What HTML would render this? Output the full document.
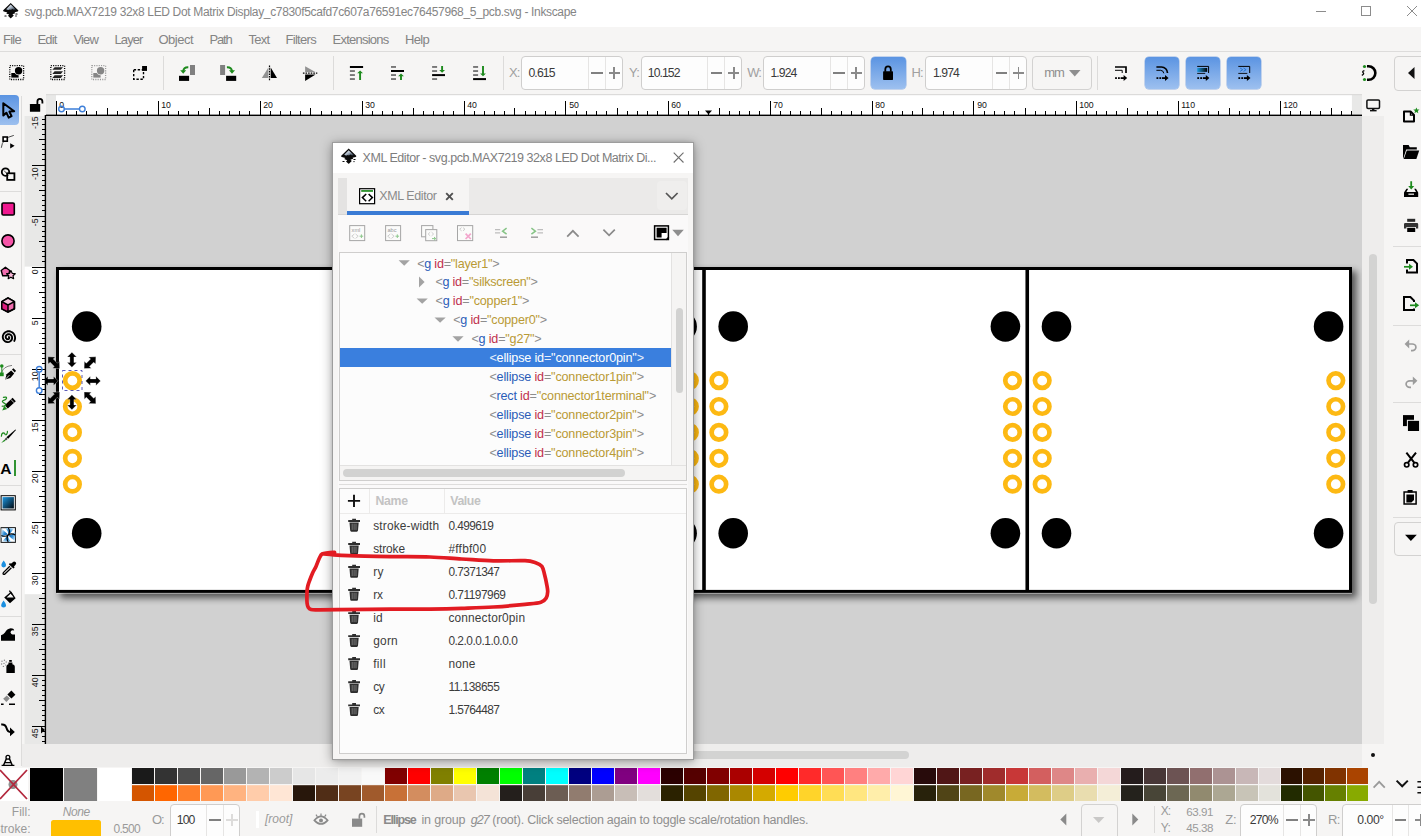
<!DOCTYPE html><html><head><meta charset="utf-8"><title>Inkscape</title><style>html,body{margin:0;padding:0}body{width:1421px;height:836px;position:relative;overflow:hidden;background:#f6f5f4;font-family:"Liberation Sans",sans-serif}span{display:block}span span{display:inline}</style></head><body><div style="position:absolute;left:0px;top:0px;width:1421px;height:27px;background:#fff;"></div><span style="position:absolute;top:4.00px;line-height:17px;font-size:12px;color:#858585;white-space:pre;left:24.40px;letter-spacing:-0.341px;">svg.pcb.MAX7219 32x8 LED Dot Matrix Display_c7830f5cafd7c607a76591ec76457968_5_pcb.svg - Inkscape</span><svg width="120" height="27" viewBox="1301 0 120 27" style="position:absolute;left:1301px;top:0"><g stroke="#8c8c8c" stroke-width="1" fill="none"><path d="M1316,11.5H1326"/><rect x="1361.5" y="6.5" width="9" height="9"/><path d="M1407,6L1417,16M1417,6L1407,16"/></g></svg><div style="position:absolute;left:0px;top:27px;width:1421px;height:24px;background:#f6f5f4;"></div><span style="position:absolute;top:30.70px;line-height:18px;font-size:13px;color:#848484;white-space:pre;left:3.00px;letter-spacing:-0.737px;">File</span><span style="position:absolute;top:30.70px;line-height:18px;font-size:13px;color:#848484;white-space:pre;left:37.50px;letter-spacing:-0.850px;">Edit</span><span style="position:absolute;top:30.70px;line-height:18px;font-size:13px;color:#848484;white-space:pre;left:73.50px;letter-spacing:-0.861px;">View</span><span style="position:absolute;top:30.70px;line-height:18px;font-size:13px;color:#848484;white-space:pre;left:114.50px;letter-spacing:-0.904px;">Layer</span><span style="position:absolute;top:30.70px;line-height:18px;font-size:13px;color:#848484;white-space:pre;left:158.50px;letter-spacing:-0.512px;">Object</span><span style="position:absolute;top:30.70px;line-height:18px;font-size:13px;color:#848484;white-space:pre;left:209.50px;letter-spacing:-1.186px;">Path</span><span style="position:absolute;top:30.70px;line-height:18px;font-size:13px;color:#848484;white-space:pre;left:248.50px;letter-spacing:-0.710px;">Text</span><span style="position:absolute;top:30.70px;line-height:18px;font-size:13px;color:#848484;white-space:pre;left:285.50px;letter-spacing:-0.698px;">Filters</span><span style="position:absolute;top:30.70px;line-height:18px;font-size:13px;color:#848484;white-space:pre;left:332.50px;letter-spacing:-0.759px;">Extensions</span><span style="position:absolute;top:30.70px;line-height:18px;font-size:13px;color:#848484;white-space:pre;left:405.00px;letter-spacing:-0.684px;">Help</span><div style="position:absolute;left:0px;top:51px;width:1421px;height:1px;background:#dddcdb;"></div><div style="position:absolute;left:0px;top:52px;width:1421px;height:42px;background:#f6f5f4;"></div><div style="position:absolute;left:163.0px;top:56px;width:1px;height:34px;background:#dcdbda;"></div><div style="position:absolute;left:333.0px;top:56px;width:1px;height:34px;background:#dcdbda;"></div><div style="position:absolute;left:503.0px;top:56px;width:1px;height:34px;background:#dcdbda;"></div><div style="position:absolute;left:1097.0px;top:56px;width:1px;height:34px;background:#dcdbda;"></div><span style="position:absolute;top:63.50px;line-height:18px;font-size:13px;color:#a0a0a0;white-space:pre;left:509.00px;letter-spacing:-0.891px;">X:</span><div style="position:absolute;left:521px;top:56px;width:99.5px;height:31.5px;background:#fdfdfd;border:1px solid #cfcecd;border-radius:4px;"></div><div style="position:absolute;left:587.8px;top:57px;width:1px;height:31.5px;background:#e6e5e4;"></div><div style="position:absolute;left:604.9px;top:57px;width:1px;height:31.5px;background:#e6e5e4;"></div><span style="position:absolute;top:64.70px;line-height:17px;font-size:12.2px;color:#3a3a3a;white-space:pre;left:528.40px;letter-spacing:-0.820px;">0.615</span><div style="position:absolute;left:591.1499999999999px;top:72.0px;width:11.4px;height:1.9px;background:#808080;"></div><div style="position:absolute;left:608.5px;top:72.0px;width:11.4px;height:1.9px;background:#8a8a8a;"></div><div style="position:absolute;left:613.25px;top:67.2px;width:1.9px;height:11.4px;background:#8a8a8a;"></div><span style="position:absolute;top:63.50px;line-height:18px;font-size:13px;color:#a0a0a0;white-space:pre;left:629.00px;letter-spacing:-0.783px;">Y:</span><div style="position:absolute;left:640.5px;top:56px;width:99.5px;height:31.5px;background:#fdfdfd;border:1px solid #cfcecd;border-radius:4px;"></div><div style="position:absolute;left:707.2px;top:57px;width:1px;height:31.5px;background:#e6e5e4;"></div><div style="position:absolute;left:724.3px;top:57px;width:1px;height:31.5px;background:#e6e5e4;"></div><span style="position:absolute;top:64.70px;line-height:17px;font-size:12.2px;color:#3a3a3a;white-space:pre;left:647.80px;letter-spacing:-0.929px;">10.152</span><div style="position:absolute;left:710.55px;top:72.0px;width:11.4px;height:1.9px;background:#808080;"></div><div style="position:absolute;left:727.9499999999999px;top:72.0px;width:11.4px;height:1.9px;background:#8a8a8a;"></div><div style="position:absolute;left:732.6999999999999px;top:67.2px;width:1.9px;height:11.4px;background:#8a8a8a;"></div><span style="position:absolute;top:63.50px;line-height:18px;font-size:13px;color:#a0a0a0;white-space:pre;left:747.30px;letter-spacing:-1.073px;">W:</span><div style="position:absolute;left:763px;top:56px;width:99.5px;height:31.5px;background:#fdfdfd;border:1px solid #cfcecd;border-radius:4px;"></div><div style="position:absolute;left:829.9px;top:57px;width:1px;height:31.5px;background:#e6e5e4;"></div><div style="position:absolute;left:847px;top:57px;width:1px;height:31.5px;background:#e6e5e4;"></div><span style="position:absolute;top:64.70px;line-height:17px;font-size:12.2px;color:#3a3a3a;white-space:pre;left:770.50px;letter-spacing:-0.920px;">1.924</span><div style="position:absolute;left:833.25px;top:72.0px;width:11.4px;height:1.9px;background:#808080;"></div><div style="position:absolute;left:850.55px;top:72.0px;width:11.4px;height:1.9px;background:#8a8a8a;"></div><div style="position:absolute;left:855.3px;top:67.2px;width:1.9px;height:11.4px;background:#8a8a8a;"></div><div style="position:absolute;left:871px;top:56.5px;width:34.5px;height:32.5px;background:linear-gradient(#5b94e2,#9dc0ef);border-radius:4px;box-shadow:0 0 0 0.5px #8fb2e3;"></div><span style="position:absolute;top:63.50px;line-height:18px;font-size:13px;color:#a0a0a0;white-space:pre;left:911.50px;letter-spacing:-1.000px;">H:</span><div style="position:absolute;left:925px;top:56px;width:99.5px;height:31.5px;background:#fdfdfd;border:1px solid #cfcecd;border-radius:4px;"></div><div style="position:absolute;left:992.3px;top:57px;width:1px;height:31.5px;background:#e6e5e4;"></div><div style="position:absolute;left:1009.4px;top:57px;width:1px;height:31.5px;background:#e6e5e4;"></div><span style="position:absolute;top:64.70px;line-height:17px;font-size:12.2px;color:#3a3a3a;white-space:pre;left:933.00px;letter-spacing:-0.920px;">1.974</span><div style="position:absolute;left:995.6499999999999px;top:72.0px;width:11.4px;height:1.9px;background:#808080;"></div><div style="position:absolute;left:1012.75px;top:72.0px;width:11.4px;height:1.9px;background:#8a8a8a;"></div><div style="position:absolute;left:1017.5px;top:67.2px;width:1.9px;height:11.4px;background:#8a8a8a;"></div><div style="position:absolute;left:1032px;top:56px;width:58px;height:31.5px;background:#f6f5f4;border:1px solid #d3d2d1;border-radius:4px;"></div><span style="position:absolute;top:64.30px;line-height:18px;font-size:13px;color:#8e8e8e;white-space:pre;left:1044.30px;letter-spacing:-1.079px;">mm</span><svg width="12" height="7" style="position:absolute;left:1069px;top:69.5px"><path d="M0,0H11.5L5.75,6.5Z" fill="#8e8e8e"/></svg><div style="position:absolute;left:1144.5px;top:56.5px;width:34.8px;height:32.7px;background:linear-gradient(#5b94e2,#9dc0ef);border-radius:4px;box-shadow:0 0 0 0.5px #8fb2e3;"></div><div style="position:absolute;left:1185.5px;top:56.5px;width:34.8px;height:32.7px;background:linear-gradient(#5b94e2,#9dc0ef);border-radius:4px;box-shadow:0 0 0 0.5px #8fb2e3;"></div><div style="position:absolute;left:1226.5px;top:56.5px;width:34.8px;height:32.7px;background:linear-gradient(#5b94e2,#9dc0ef);border-radius:4px;box-shadow:0 0 0 0.5px #8fb2e3;"></div><div style="position:absolute;left:1393.5px;top:56px;width:30px;height:33px;background:#f6f5f4;border:1px solid #d3d2d1;border-radius:4px;"></div><svg width="8" height="13" style="position:absolute;left:1407.5px;top:66.5px"><path d="M6.5,0V12L0,6Z" fill="#111"/></svg><div style="position:absolute;left:21.3px;top:96px;width:1px;height:670px;background:#dddcdb;"></div><div style="position:absolute;left:0px;top:95px;width:19.2px;height:30px;background:linear-gradient(#5b94e2,#9dc0ef);border-radius:0 4px 4px 0;"></div><div style="position:absolute;left:0px;top:191.1px;width:21px;height:1px;background:#dddcdb;"></div><div style="position:absolute;left:0px;top:353.7px;width:21px;height:1px;background:#dddcdb;"></div><div style="position:absolute;left:0px;top:484.9px;width:21px;height:1px;background:#dddcdb;"></div><div style="position:absolute;left:0px;top:615.7px;width:21px;height:1px;background:#dddcdb;"></div><div style="position:absolute;left:1392.5px;top:245.9px;width:29px;height:1px;background:#dddcdb;"></div><div style="position:absolute;left:1392.5px;top:324.5px;width:29px;height:1px;background:#dddcdb;"></div><div style="position:absolute;left:1392.5px;top:402.1px;width:29px;height:1px;background:#dddcdb;"></div><div style="position:absolute;left:1392.5px;top:517.1px;width:29px;height:1px;background:#dddcdb;"></div><div style="position:absolute;left:1393.5px;top:521.6px;width:30px;height:32px;background:#f6f5f4;border:1px solid #d3d2d1;border-radius:4px;"></div><span style="position:absolute;top:460.60px;line-height:16px;font-size:15.5px;color:#000;white-space:pre;left:0.30px;font-weight:bold;">A</span><div style="position:absolute;left:46px;top:116px;width:1316px;height:628px;background:#d1d1d1;overflow:hidden"><svg width="1421" height="836" viewBox="0 0 1421 836" style="position:absolute;left:-46px;top:-116px"><defs><filter id="psh" x="-5%" y="-5%" width="110%" height="115%"><feGaussianBlur stdDeviation="3.8"/></filter></defs><rect x="60" y="271" width="1296.5" height="327" fill="#000" opacity="0.6" filter="url(#psh)"/><rect x="56.6" y="267.0" width="1295.3" height="326.4" fill="#fff"/><rect x="57.5" y="268.5" width="1293.0" height="322.9" fill="none" stroke="#000" stroke-width="3"/><line x1="380.75" y1="268.5" x2="380.75" y2="591.4" stroke="#000" stroke-width="3.6"/><line x1="704.00" y1="268.5" x2="704.00" y2="591.4" stroke="#000" stroke-width="3.6"/><line x1="1027.25" y1="268.5" x2="1027.25" y2="591.4" stroke="#000" stroke-width="3.6"/><ellipse cx="86.7" cy="326.5" rx="14.8" ry="15.2" fill="#000"/><ellipse cx="86.7" cy="533.2" rx="14.8" ry="15.2" fill="#000"/><ellipse cx="358.9" cy="326.5" rx="14.8" ry="15.2" fill="#000"/><ellipse cx="358.9" cy="533.2" rx="14.8" ry="15.2" fill="#000"/><circle cx="72.4" cy="380.6" r="7.25" fill="none" stroke="#fdb913" stroke-width="4.7"/><circle cx="72.4" cy="406.5" r="7.25" fill="none" stroke="#fdb913" stroke-width="4.7"/><circle cx="72.4" cy="432.4" r="7.25" fill="none" stroke="#fdb913" stroke-width="4.7"/><circle cx="72.4" cy="458.3" r="7.25" fill="none" stroke="#fdb913" stroke-width="4.7"/><circle cx="72.4" cy="484.2" r="7.25" fill="none" stroke="#fdb913" stroke-width="4.7"/><circle cx="366.1" cy="380.6" r="7.25" fill="none" stroke="#fdb913" stroke-width="4.7"/><circle cx="366.1" cy="406.5" r="7.25" fill="none" stroke="#fdb913" stroke-width="4.7"/><circle cx="366.1" cy="432.4" r="7.25" fill="none" stroke="#fdb913" stroke-width="4.7"/><circle cx="366.1" cy="458.3" r="7.25" fill="none" stroke="#fdb913" stroke-width="4.7"/><circle cx="366.1" cy="484.2" r="7.25" fill="none" stroke="#fdb913" stroke-width="4.7"/><ellipse cx="409.9" cy="326.5" rx="14.8" ry="15.2" fill="#000"/><ellipse cx="409.9" cy="533.2" rx="14.8" ry="15.2" fill="#000"/><ellipse cx="682.1" cy="326.5" rx="14.8" ry="15.2" fill="#000"/><ellipse cx="682.1" cy="533.2" rx="14.8" ry="15.2" fill="#000"/><circle cx="395.6" cy="380.6" r="7.25" fill="none" stroke="#fdb913" stroke-width="4.7"/><circle cx="395.6" cy="406.5" r="7.25" fill="none" stroke="#fdb913" stroke-width="4.7"/><circle cx="395.6" cy="432.4" r="7.25" fill="none" stroke="#fdb913" stroke-width="4.7"/><circle cx="395.6" cy="458.3" r="7.25" fill="none" stroke="#fdb913" stroke-width="4.7"/><circle cx="395.6" cy="484.2" r="7.25" fill="none" stroke="#fdb913" stroke-width="4.7"/><circle cx="689.3" cy="380.6" r="7.25" fill="none" stroke="#fdb913" stroke-width="4.7"/><circle cx="689.3" cy="406.5" r="7.25" fill="none" stroke="#fdb913" stroke-width="4.7"/><circle cx="689.3" cy="432.4" r="7.25" fill="none" stroke="#fdb913" stroke-width="4.7"/><circle cx="689.3" cy="458.3" r="7.25" fill="none" stroke="#fdb913" stroke-width="4.7"/><circle cx="689.3" cy="484.2" r="7.25" fill="none" stroke="#fdb913" stroke-width="4.7"/><ellipse cx="733.2" cy="326.5" rx="14.8" ry="15.2" fill="#000"/><ellipse cx="733.2" cy="533.2" rx="14.8" ry="15.2" fill="#000"/><ellipse cx="1005.4" cy="326.5" rx="14.8" ry="15.2" fill="#000"/><ellipse cx="1005.4" cy="533.2" rx="14.8" ry="15.2" fill="#000"/><circle cx="718.9" cy="380.6" r="7.25" fill="none" stroke="#fdb913" stroke-width="4.7"/><circle cx="718.9" cy="406.5" r="7.25" fill="none" stroke="#fdb913" stroke-width="4.7"/><circle cx="718.9" cy="432.4" r="7.25" fill="none" stroke="#fdb913" stroke-width="4.7"/><circle cx="718.9" cy="458.3" r="7.25" fill="none" stroke="#fdb913" stroke-width="4.7"/><circle cx="718.9" cy="484.2" r="7.25" fill="none" stroke="#fdb913" stroke-width="4.7"/><circle cx="1012.5" cy="380.6" r="7.25" fill="none" stroke="#fdb913" stroke-width="4.7"/><circle cx="1012.5" cy="406.5" r="7.25" fill="none" stroke="#fdb913" stroke-width="4.7"/><circle cx="1012.5" cy="432.4" r="7.25" fill="none" stroke="#fdb913" stroke-width="4.7"/><circle cx="1012.5" cy="458.3" r="7.25" fill="none" stroke="#fdb913" stroke-width="4.7"/><circle cx="1012.5" cy="484.2" r="7.25" fill="none" stroke="#fdb913" stroke-width="4.7"/><ellipse cx="1056.5" cy="326.5" rx="14.8" ry="15.2" fill="#000"/><ellipse cx="1056.5" cy="533.2" rx="14.8" ry="15.2" fill="#000"/><ellipse cx="1328.6" cy="326.5" rx="14.8" ry="15.2" fill="#000"/><ellipse cx="1328.6" cy="533.2" rx="14.8" ry="15.2" fill="#000"/><circle cx="1042.2" cy="380.6" r="7.25" fill="none" stroke="#fdb913" stroke-width="4.7"/><circle cx="1042.2" cy="406.5" r="7.25" fill="none" stroke="#fdb913" stroke-width="4.7"/><circle cx="1042.2" cy="432.4" r="7.25" fill="none" stroke="#fdb913" stroke-width="4.7"/><circle cx="1042.2" cy="458.3" r="7.25" fill="none" stroke="#fdb913" stroke-width="4.7"/><circle cx="1042.2" cy="484.2" r="7.25" fill="none" stroke="#fdb913" stroke-width="4.7"/><circle cx="1335.8" cy="380.6" r="7.25" fill="none" stroke="#fdb913" stroke-width="4.7"/><circle cx="1335.8" cy="406.5" r="7.25" fill="none" stroke="#fdb913" stroke-width="4.7"/><circle cx="1335.8" cy="432.4" r="7.25" fill="none" stroke="#fdb913" stroke-width="4.7"/><circle cx="1335.8" cy="458.3" r="7.25" fill="none" stroke="#fdb913" stroke-width="4.7"/><circle cx="1335.8" cy="484.2" r="7.25" fill="none" stroke="#fdb913" stroke-width="4.7"/><rect x="62.5" y="370.5" width="19.5" height="20" fill="none" stroke="#4a4ab0" stroke-width="0.9" stroke-dasharray="3 3"/><path d="M-7.5,0 L-2.8,-4.7 L-2.8,-2 L2.8,-2 L2.8,-4.7 L7.5,0 L2.8,4.7 L2.8,2 L-2.8,2 L-2.8,4.7 Z" transform="translate(71.9,359.8) rotate(90)" fill="#000" stroke="#fff" stroke-opacity="0.35" stroke-width="0.8"/><path d="M-7.5,0 L-2.8,-4.7 L-2.8,-2 L2.8,-2 L2.8,-4.7 L7.5,0 L2.8,4.7 L2.8,2 L-2.8,2 L-2.8,4.7 Z" transform="translate(71.9,402.2) rotate(90)" fill="#000" stroke="#fff" stroke-opacity="0.35" stroke-width="0.8"/><path d="M-7.5,0 L-2.8,-4.7 L-2.8,-2 L2.8,-2 L2.8,-4.7 L7.5,0 L2.8,4.7 L2.8,2 L-2.8,2 L-2.8,4.7 Z" transform="translate(93.1,380.9) rotate(0)" fill="#000" stroke="#fff" stroke-opacity="0.35" stroke-width="0.8"/><path d="M-7.5,0 L-2.8,-4.7 L-2.8,-2 L2.8,-2 L2.8,-4.7 L7.5,0 L2.8,4.7 L2.8,2 L-2.8,2 L-2.8,4.7 Z" transform="translate(50.7,380.9) rotate(0)" fill="#000" stroke="#fff" stroke-opacity="0.35" stroke-width="0.8"/><path d="M-8.3,0 L-3,-5 L-3,-2.2 L3,-2.2 L3,-5 L8.3,0 L3,5 L3,2.2 L-3,2.2 L-3,5 Z" transform="translate(90.0,362.7) rotate(-45)" fill="#000" stroke="#fff" stroke-opacity="0.35" stroke-width="0.8"/><path d="M-8.3,0 L-3,-5 L-3,-2.2 L3,-2.2 L3,-5 L8.3,0 L3,5 L3,2.2 L-3,2.2 L-3,5 Z" transform="translate(53.8,362.7) rotate(45)" fill="#000" stroke="#fff" stroke-opacity="0.35" stroke-width="0.8"/><path d="M-8.3,0 L-3,-5 L-3,-2.2 L3,-2.2 L3,-5 L8.3,0 L3,5 L3,2.2 L-3,2.2 L-3,5 Z" transform="translate(90.0,397.8) rotate(45)" fill="#000" stroke="#fff" stroke-opacity="0.35" stroke-width="0.8"/><path d="M-8.3,0 L-3,-5 L-3,-2.2 L3,-2.2 L3,-5 L8.3,0 L3,5 L3,2.2 L-3,2.2 L-3,5 Z" transform="translate(53.8,397.8) rotate(-45)" fill="#000" stroke="#fff" stroke-opacity="0.35" stroke-width="0.8"/></svg></div><svg width="1421" height="836" viewBox="0 0 1421 836" style="position:absolute;left:0;top:0;pointer-events:none"><rect x="46" y="94.5" width="1316" height="21.5" fill="#e8e8e7"/><rect x="56.0" y="94.5" width="1295.9" height="21.5" fill="#fff"/><rect x="46" y="94" width="1316" height="1.2" fill="#dcdbda"/><path d="M56.5,101V115.5M66.5,111V115.5M76.5,111V115.5M86.5,111V115.5M96.5,111V115.5M107.5,108V115.5M117.5,111V115.5M127.5,111V115.5M137.5,111V115.5M147.5,111V115.5M158.5,101V115.5M168.5,111V115.5M178.5,111V115.5M188.5,111V115.5M198.5,111V115.5M209.5,108V115.5M219.5,111V115.5M229.5,111V115.5M239.5,111V115.5M249.5,111V115.5M260.5,101V115.5M270.5,111V115.5M280.5,111V115.5M290.5,111V115.5M300.5,111V115.5M310.5,108V115.5M321.5,111V115.5M331.5,111V115.5M341.5,111V115.5M351.5,111V115.5M362.5,101V115.5M372.5,111V115.5M382.5,111V115.5M392.5,111V115.5M402.5,111V115.5M413.5,108V115.5M423.5,111V115.5M433.5,111V115.5M443.5,111V115.5M453.5,111V115.5M464.5,101V115.5M474.5,111V115.5M484.5,111V115.5M494.5,111V115.5M504.5,111V115.5M514.5,108V115.5M525.5,111V115.5M535.5,111V115.5M545.5,111V115.5M555.5,111V115.5M565.5,101V115.5M576.5,111V115.5M586.5,111V115.5M596.5,111V115.5M606.5,111V115.5M617.5,108V115.5M627.5,111V115.5M637.5,111V115.5M647.5,111V115.5M657.5,111V115.5M668.5,101V115.5M678.5,111V115.5M688.5,111V115.5M698.5,111V115.5M708.5,111V115.5M719.5,108V115.5M729.5,111V115.5M739.5,111V115.5M749.5,111V115.5M759.5,111V115.5M770.5,101V115.5M780.5,111V115.5M790.5,111V115.5M800.5,111V115.5M810.5,111V115.5M821.5,108V115.5M831.5,111V115.5M841.5,111V115.5M851.5,111V115.5M861.5,111V115.5M872.5,101V115.5M882.5,111V115.5M892.5,111V115.5M902.5,111V115.5M912.5,111V115.5M922.5,108V115.5M933.5,111V115.5M943.5,111V115.5M953.5,111V115.5M963.5,111V115.5M973.5,101V115.5M984.5,111V115.5M994.5,111V115.5M1004.5,111V115.5M1014.5,111V115.5M1025.5,108V115.5M1035.5,111V115.5M1045.5,111V115.5M1055.5,111V115.5M1065.5,111V115.5M1076.5,101V115.5M1086.5,111V115.5M1096.5,111V115.5M1106.5,111V115.5M1116.5,111V115.5M1127.5,108V115.5M1137.5,111V115.5M1147.5,111V115.5M1157.5,111V115.5M1167.5,111V115.5M1178.5,101V115.5M1188.5,111V115.5M1198.5,111V115.5M1208.5,111V115.5M1218.5,111V115.5M1229.5,108V115.5M1239.5,111V115.5M1249.5,111V115.5M1259.5,111V115.5M1269.5,111V115.5M1280.5,101V115.5M1290.5,111V115.5M1300.5,111V115.5M1310.5,111V115.5M1320.5,111V115.5M1331.5,108V115.5M1341.5,111V115.5M1351.5,111V115.5" stroke="#000" stroke-width="1" fill="none" shape-rendering="crispEdges"/><rect x="46" y="114.6" width="1316" height="1.4" fill="#000"/><text x="59.2" y="108" font-size="8.7" fill="#111" font-family="Liberation Sans, sans-serif">0</text><text x="161.2" y="108" font-size="8.7" fill="#111" font-family="Liberation Sans, sans-serif">10</text><text x="263.2" y="108" font-size="8.7" fill="#111" font-family="Liberation Sans, sans-serif">20</text><text x="365.2" y="108" font-size="8.7" fill="#111" font-family="Liberation Sans, sans-serif">30</text><text x="467.2" y="108" font-size="8.7" fill="#111" font-family="Liberation Sans, sans-serif">40</text><text x="569.2" y="108" font-size="8.7" fill="#111" font-family="Liberation Sans, sans-serif">50</text><text x="671.2" y="108" font-size="8.7" fill="#111" font-family="Liberation Sans, sans-serif">60</text><text x="773.2" y="108" font-size="8.7" fill="#111" font-family="Liberation Sans, sans-serif">70</text><text x="875.2" y="108" font-size="8.7" fill="#111" font-family="Liberation Sans, sans-serif">80</text><text x="977.2" y="108" font-size="8.7" fill="#111" font-family="Liberation Sans, sans-serif">90</text><text x="1079.2" y="108" font-size="8.7" fill="#111" font-family="Liberation Sans, sans-serif">100</text><text x="1181.2" y="108" font-size="8.7" fill="#111" font-family="Liberation Sans, sans-serif">110</text><text x="1283.2" y="108" font-size="8.7" fill="#111" font-family="Liberation Sans, sans-serif">120</text><rect x="24.6" y="116" width="21.4" height="628" fill="#e8e8e7"/><rect x="24.6" y="266.6" width="21.4" height="327.6" fill="#fff"/><path d="M41.5,119.5H45.5M41.5,124.5H45.5M41.5,129.5H45.5M41.5,134.5H45.5M38.5,139.5H45.5M41.5,144.5H45.5M41.5,149.5H45.5M41.5,154.5H45.5M41.5,159.5H45.5M32,165.5H45.5M41.5,170.5H45.5M41.5,175.5H45.5M41.5,180.5H45.5M41.5,185.5H45.5M38.5,190.5H45.5M41.5,195.5H45.5M41.5,200.5H45.5M41.5,205.5H45.5M41.5,210.5H45.5M32,216.5H45.5M41.5,221.5H45.5M41.5,226.5H45.5M41.5,231.5H45.5M41.5,236.5H45.5M38.5,241.5H45.5M41.5,246.5H45.5M41.5,251.5H45.5M41.5,256.5H45.5M41.5,261.5H45.5M32,267.5H45.5M41.5,272.5H45.5M41.5,277.5H45.5M41.5,282.5H45.5M41.5,287.5H45.5M38.5,292.5H45.5M41.5,297.5H45.5M41.5,302.5H45.5M41.5,307.5H45.5M41.5,312.5H45.5M32,318.5H45.5M41.5,323.5H45.5M41.5,328.5H45.5M41.5,333.5H45.5M41.5,338.5H45.5M38.5,343.5H45.5M41.5,348.5H45.5M41.5,353.5H45.5M41.5,358.5H45.5M41.5,363.5H45.5M32,369.5H45.5M41.5,374.5H45.5M41.5,379.5H45.5M41.5,384.5H45.5M41.5,389.5H45.5M38.5,394.5H45.5M41.5,399.5H45.5M41.5,404.5H45.5M41.5,409.5H45.5M41.5,414.5H45.5M32,420.5H45.5M41.5,425.5H45.5M41.5,430.5H45.5M41.5,435.5H45.5M41.5,440.5H45.5M38.5,445.5H45.5M41.5,450.5H45.5M41.5,455.5H45.5M41.5,460.5H45.5M41.5,465.5H45.5M32,471.5H45.5M41.5,476.5H45.5M41.5,481.5H45.5M41.5,486.5H45.5M41.5,491.5H45.5M38.5,496.5H45.5M41.5,501.5H45.5M41.5,506.5H45.5M41.5,511.5H45.5M41.5,516.5H45.5M32,522.5H45.5M41.5,527.5H45.5M41.5,532.5H45.5M41.5,537.5H45.5M41.5,542.5H45.5M38.5,547.5H45.5M41.5,552.5H45.5M41.5,557.5H45.5M41.5,562.5H45.5M41.5,567.5H45.5M32,573.5H45.5M41.5,578.5H45.5M41.5,583.5H45.5M41.5,588.5H45.5M41.5,593.5H45.5M38.5,598.5H45.5M41.5,603.5H45.5M41.5,608.5H45.5M41.5,613.5H45.5M41.5,618.5H45.5M32,624.5H45.5M41.5,629.5H45.5M41.5,634.5H45.5M41.5,639.5H45.5M41.5,644.5H45.5M38.5,649.5H45.5M41.5,654.5H45.5M41.5,659.5H45.5M41.5,664.5H45.5M41.5,669.5H45.5M32,675.5H45.5M41.5,680.5H45.5M41.5,685.5H45.5M41.5,690.5H45.5M41.5,695.5H45.5M38.5,700.5H45.5M41.5,705.5H45.5M41.5,710.5H45.5M41.5,715.5H45.5M41.5,720.5H45.5M32,726.5H45.5M41.5,731.5H45.5M41.5,736.5H45.5M41.5,741.5H45.5" stroke="#000" stroke-width="1" fill="none" shape-rendering="crispEdges"/><rect x="44.7" y="115" width="1.4" height="629" fill="#000"/><text transform="translate(37.6,116.5) rotate(-90)" text-anchor="end" font-size="8.7" fill="#111" font-family="Liberation Sans, sans-serif">-15</text><text transform="translate(37.6,167.5) rotate(-90)" text-anchor="end" font-size="8.7" fill="#111" font-family="Liberation Sans, sans-serif">-10</text><text transform="translate(37.6,218.5) rotate(-90)" text-anchor="end" font-size="8.7" fill="#111" font-family="Liberation Sans, sans-serif">-5</text><text transform="translate(37.6,269.5) rotate(-90)" text-anchor="end" font-size="8.7" fill="#111" font-family="Liberation Sans, sans-serif">0</text><text transform="translate(37.6,320.5) rotate(-90)" text-anchor="end" font-size="8.7" fill="#111" font-family="Liberation Sans, sans-serif">5</text><text transform="translate(37.6,371.5) rotate(-90)" text-anchor="end" font-size="8.7" fill="#111" font-family="Liberation Sans, sans-serif">10</text><text transform="translate(37.6,422.5) rotate(-90)" text-anchor="end" font-size="8.7" fill="#111" font-family="Liberation Sans, sans-serif">15</text><text transform="translate(37.6,473.5) rotate(-90)" text-anchor="end" font-size="8.7" fill="#111" font-family="Liberation Sans, sans-serif">20</text><text transform="translate(37.6,524.5) rotate(-90)" text-anchor="end" font-size="8.7" fill="#111" font-family="Liberation Sans, sans-serif">25</text><text transform="translate(37.6,575.5) rotate(-90)" text-anchor="end" font-size="8.7" fill="#111" font-family="Liberation Sans, sans-serif">30</text><text transform="translate(37.6,626.5) rotate(-90)" text-anchor="end" font-size="8.7" fill="#111" font-family="Liberation Sans, sans-serif">35</text><text transform="translate(37.6,677.5) rotate(-90)" text-anchor="end" font-size="8.7" fill="#111" font-family="Liberation Sans, sans-serif">40</text><text transform="translate(37.6,728.5) rotate(-90)" text-anchor="end" font-size="8.7" fill="#111" font-family="Liberation Sans, sans-serif">45</text><g fill="none" stroke="#3d7fd9" stroke-width="1.4"><path d="M64.3,109H79.4M39.2,372.2V387.7"/><circle cx="61.5" cy="109" r="2.8"/><circle cx="82.3" cy="109" r="2.8"/><circle cx="39.2" cy="369.3" r="2.8"/><circle cx="39.2" cy="390.6" r="2.8"/></g><path d="M41,726.5L45,730L41,733.5Z" fill="#000"/><path d="M705,110.5L712,110.5L708.5,114.5Z" fill="#000"/></svg><div style="position:absolute;left:22px;top:744px;width:1340px;height:22.5px;background:#eeedec;"></div><div style="position:absolute;left:400px;top:750.6px;width:508.5px;height:8px;background:#d3d3d2;border-radius:4px;"></div><div style="position:absolute;left:1362px;top:116px;width:22px;height:628px;background:#eeedec;"></div><div style="position:absolute;left:1362px;top:744px;width:22px;height:22.5px;background:#f6f5f4;"></div><div style="position:absolute;left:1368.8px;top:254.3px;width:8px;height:350px;background:#d3d3d2;border-radius:4px;"></div><div style="position:absolute;left:1370.8px;top:752.5px;width:4.4px;height:4.4px;background:#111;border-radius:50%;"></div><div style="position:absolute;left:0px;top:766.5px;width:1421px;height:36px;background:#f6f5f4;"></div><div style="position:absolute;left:0px;top:768px;width:27.5px;height:33px;background:#fff;"></div><svg width="28" height="33" style="position:absolute;left:0;top:768px"><circle cx="13" cy="16.5" r="4.5" fill="#8f8f8f"/><path d="M0,2L27,31M27,2L0,31" stroke="#b3283d" stroke-width="1.8" fill="none"/></svg><div style="position:absolute;left:30.2px;top:768px;width:32.7px;height:33px;background:#000;"></div><div style="position:absolute;left:64.2px;top:768px;width:32.7px;height:33px;background:#808080;"></div><div style="position:absolute;left:98.2px;top:768px;width:32.7px;height:33px;background:#fff;"></div><svg width="1240" height="33" viewBox="132 0 1240 33" style="position:absolute;left:132px;top:768px"><rect x="132" y="0" width="22" height="16" fill="#1a1a1a"/><rect x="132" y="17.2" width="22" height="15.8" fill="#d45500"/><rect x="155" y="0" width="22" height="16" fill="#333333"/><rect x="155" y="17.2" width="22" height="15.8" fill="#ff6600"/><rect x="178" y="0" width="22" height="16" fill="#4d4d4d"/><rect x="178" y="17.2" width="22" height="15.8" fill="#ff7f2a"/><rect x="201" y="0" width="22" height="16" fill="#666666"/><rect x="201" y="17.2" width="22" height="15.8" fill="#ff9955"/><rect x="224" y="0" width="22" height="16" fill="#999999"/><rect x="224" y="17.2" width="22" height="15.8" fill="#ffb380"/><rect x="247" y="0" width="22" height="16" fill="#b3b3b3"/><rect x="247" y="17.2" width="22" height="15.8" fill="#ffccaa"/><rect x="270" y="0" width="22" height="16" fill="#cccccc"/><rect x="270" y="17.2" width="22" height="15.8" fill="#ffe6d5"/><rect x="293" y="0" width="22" height="16" fill="#e6e6e6"/><rect x="293" y="17.2" width="22" height="15.8" fill="#28170b"/><rect x="316" y="0" width="22" height="16" fill="#ececec"/><rect x="316" y="17.2" width="22" height="15.8" fill="#502d16"/><rect x="339" y="0" width="22" height="16" fill="#f2f2f2"/><rect x="339" y="17.2" width="22" height="15.8" fill="#784421"/><rect x="362" y="0" width="22" height="16" fill="#f9f9f9"/><rect x="362" y="17.2" width="22" height="15.8" fill="#a05a2c"/><rect x="385" y="0" width="22" height="16" fill="#800000"/><rect x="385" y="17.2" width="22" height="15.8" fill="#c87137"/><rect x="408" y="0" width="22" height="16" fill="#ff0000"/><rect x="408" y="17.2" width="22" height="15.8" fill="#d38d5f"/><rect x="431" y="0" width="22" height="16" fill="#808000"/><rect x="431" y="17.2" width="22" height="15.8" fill="#deaa87"/><rect x="454" y="0" width="22" height="16" fill="#ffff00"/><rect x="454" y="17.2" width="22" height="15.8" fill="#e9c6af"/><rect x="477" y="0" width="22" height="16" fill="#008000"/><rect x="477" y="17.2" width="22" height="15.8" fill="#f4e3d7"/><rect x="500" y="0" width="22" height="16" fill="#00ff00"/><rect x="500" y="17.2" width="22" height="15.8" fill="#241f1c"/><rect x="523" y="0" width="22" height="16" fill="#008080"/><rect x="523" y="17.2" width="22" height="15.8" fill="#483e37"/><rect x="546" y="0" width="22" height="16" fill="#00ffff"/><rect x="546" y="17.2" width="22" height="15.8" fill="#6c5d53"/><rect x="569" y="0" width="22" height="16" fill="#000080"/><rect x="569" y="17.2" width="22" height="15.8" fill="#917c6f"/><rect x="592" y="0" width="22" height="16" fill="#0000ff"/><rect x="592" y="17.2" width="22" height="15.8" fill="#ac9d93"/><rect x="615" y="0" width="22" height="16" fill="#800080"/><rect x="615" y="17.2" width="22" height="15.8" fill="#c8beb7"/><rect x="638" y="0" width="22" height="16" fill="#ff00ff"/><rect x="638" y="17.2" width="22" height="15.8" fill="#e3dedb"/><rect x="661" y="0" width="22" height="16" fill="#2b0000"/><rect x="661" y="17.2" width="22" height="15.8" fill="#2b2200"/><rect x="684" y="0" width="22" height="16" fill="#550000"/><rect x="684" y="17.2" width="22" height="15.8" fill="#554400"/><rect x="707" y="0" width="22" height="16" fill="#800000"/><rect x="707" y="17.2" width="22" height="15.8" fill="#806600"/><rect x="730" y="0" width="22" height="16" fill="#aa0000"/><rect x="730" y="17.2" width="22" height="15.8" fill="#aa8800"/><rect x="753" y="0" width="22" height="16" fill="#d40000"/><rect x="753" y="17.2" width="22" height="15.8" fill="#d4aa00"/><rect x="776" y="0" width="22" height="16" fill="#ff0000"/><rect x="776" y="17.2" width="22" height="15.8" fill="#ffcc00"/><rect x="799" y="0" width="22" height="16" fill="#ff2a2a"/><rect x="799" y="17.2" width="22" height="15.8" fill="#ffd42a"/><rect x="822" y="0" width="22" height="16" fill="#ff5555"/><rect x="822" y="17.2" width="22" height="15.8" fill="#ffdd55"/><rect x="845" y="0" width="22" height="16" fill="#ff8080"/><rect x="845" y="17.2" width="22" height="15.8" fill="#ffe680"/><rect x="868" y="0" width="22" height="16" fill="#ffaaaa"/><rect x="868" y="17.2" width="22" height="15.8" fill="#ffeeaa"/><rect x="891" y="0" width="22" height="16" fill="#ffd5d5"/><rect x="891" y="17.2" width="22" height="15.8" fill="#fff6d5"/><rect x="914" y="0" width="22" height="16" fill="#280b0b"/><rect x="914" y="17.2" width="22" height="15.8" fill="#28220b"/><rect x="937" y="0" width="22" height="16" fill="#501616"/><rect x="937" y="17.2" width="22" height="15.8" fill="#504416"/><rect x="960" y="0" width="22" height="16" fill="#782121"/><rect x="960" y="17.2" width="22" height="15.8" fill="#786721"/><rect x="983" y="0" width="22" height="16" fill="#a02c2c"/><rect x="983" y="17.2" width="22" height="15.8" fill="#a0892c"/><rect x="1006" y="0" width="22" height="16" fill="#c83737"/><rect x="1006" y="17.2" width="22" height="15.8" fill="#c8ab37"/><rect x="1029" y="0" width="22" height="16" fill="#d35f5f"/><rect x="1029" y="17.2" width="22" height="15.8" fill="#d3bc5f"/><rect x="1052" y="0" width="22" height="16" fill="#de8787"/><rect x="1052" y="17.2" width="22" height="15.8" fill="#decd87"/><rect x="1075" y="0" width="22" height="16" fill="#e9afaf"/><rect x="1075" y="17.2" width="22" height="15.8" fill="#e9ddaf"/><rect x="1098" y="0" width="22" height="16" fill="#f4d7d7"/><rect x="1098" y="17.2" width="22" height="15.8" fill="#f4eed7"/><rect x="1121" y="0" width="22" height="16" fill="#241c1c"/><rect x="1121" y="17.2" width="22" height="15.8" fill="#24221c"/><rect x="1144" y="0" width="22" height="16" fill="#483737"/><rect x="1144" y="17.2" width="22" height="15.8" fill="#484537"/><rect x="1167" y="0" width="22" height="16" fill="#6c5353"/><rect x="1167" y="17.2" width="22" height="15.8" fill="#6c6753"/><rect x="1190" y="0" width="22" height="16" fill="#916f6f"/><rect x="1190" y="17.2" width="22" height="15.8" fill="#918a6f"/><rect x="1213" y="0" width="22" height="16" fill="#ac9393"/><rect x="1213" y="17.2" width="22" height="15.8" fill="#aca793"/><rect x="1236" y="0" width="22" height="16" fill="#c8b7b7"/><rect x="1236" y="17.2" width="22" height="15.8" fill="#c8c4b7"/><rect x="1259" y="0" width="21" height="16" fill="#e3dbdb"/><rect x="1259" y="17.2" width="21" height="15.8" fill="#e3e2db"/><rect x="1281" y="0" width="21" height="16" fill="#2b1100"/><rect x="1281" y="17.2" width="21" height="15.8" fill="#222b00"/><rect x="1303" y="0" width="21" height="16" fill="#552200"/><rect x="1303" y="17.2" width="21" height="15.8" fill="#445500"/><rect x="1325" y="0" width="21" height="16" fill="#803300"/><rect x="1325" y="17.2" width="21" height="15.8" fill="#668000"/><rect x="1347" y="0" width="21" height="16" fill="#aa4400"/><rect x="1347" y="17.2" width="21" height="15.8" fill="#88aa00"/></svg><svg width="50" height="30" viewBox="1372 770 50 30" style="position:absolute;left:1372px;top:770px"><path d="M1373.6,787.6L1379.2,781.9L1384.8,787.6" stroke="#9a9a9a" stroke-width="1.8" fill="none"/><path d="M1396.6,780.6L1402.2,786.3L1407.8,780.6" stroke="#111" stroke-width="2" fill="none"/><path d="M1417.4,781.8H1422M1417.4,787.3H1422M1417.4,792.7H1422" stroke="#111" stroke-width="1.6"/></svg><div style="position:absolute;left:0px;top:802px;width:1421px;height:34px;background:#f6f5f4;"></div><span style="position:absolute;top:803.50px;line-height:17px;font-size:12px;color:#9a9a9a;white-space:pre;right:1390.50px;">Fill:</span><span style="position:absolute;top:821.00px;line-height:17px;font-size:12px;color:#9a9a9a;white-space:pre;right:1390.50px;">Stroke:</span><span style="position:absolute;top:804.30px;line-height:17px;font-size:12px;color:#9a9a9a;white-space:pre;left:62.70px;font-style:italic;letter-spacing:-0.422px;">None</span><div style="position:absolute;left:51px;top:820px;width:49.5px;height:20px;background:#ffbf00;border-radius:2.5px;"></div><span style="position:absolute;top:821.00px;line-height:17px;font-size:12px;color:#9a9a9a;white-space:pre;left:113.40px;letter-spacing:-0.686px;">0.500</span><span style="position:absolute;top:810.50px;line-height:18px;font-size:13px;color:#9a9a9a;white-space:pre;left:152.00px;letter-spacing:-1.112px;">O:</span><div style="position:absolute;left:170px;top:803.7px;width:68px;height:38px;background:#fdfdfd;border:1px solid #cfcecd;border-radius:4px;"></div><div style="position:absolute;left:206px;top:804.7px;width:1px;height:38px;background:#e6e5e4;"></div><div style="position:absolute;left:223px;top:804.7px;width:1px;height:38px;background:#e6e5e4;"></div><span style="position:absolute;top:811.70px;line-height:17px;font-size:12.2px;color:#3a3a3a;white-space:pre;left:176.80px;letter-spacing:-0.878px;">100</span><div style="position:absolute;left:209.3px;top:819.0px;width:11.4px;height:1.9px;background:#808080;"></div><div style="position:absolute;left:226.3px;top:819.0px;width:11.4px;height:1.9px;background:#dddcdb;"></div><div style="position:absolute;left:231.05px;top:814.2px;width:1.9px;height:11.4px;background:#dddcdb;"></div><div style="position:absolute;left:255.7px;top:811px;width:3.3px;height:16.7px;background:#fff;"></div><span style="position:absolute;top:810.80px;line-height:17px;font-size:12px;color:#9a9a9a;white-space:pre;left:265.00px;font-style:italic;letter-spacing:-0.008px;">[root]</span><div style="position:absolute;left:376px;top:806px;width:1px;height:27px;background:#dcdbda;"></div><span style="position:absolute;top:810.50px;line-height:18px;font-size:12.5px;color:#8a8a8a;white-space:pre;left:383.30px;font-weight:bold;letter-spacing:-1.128px;">Ellipse</span><span style="position:absolute;top:810.50px;line-height:18px;font-size:12.5px;color:#8f8f8f;white-space:pre;left:421.50px;letter-spacing:-0.183px;">in group </span><span style="position:absolute;top:810.50px;line-height:18px;font-size:12.5px;color:#8f8f8f;white-space:pre;left:470.80px;font-style:italic;letter-spacing:-0.952px;">g27</span><span style="position:absolute;top:810.50px;line-height:18px;font-size:12.5px;color:#8f8f8f;white-space:pre;left:492.30px;letter-spacing:-0.234px;">(root). Click selection again to toggle scale/rotation handles.</span><svg width="90" height="30" viewBox="1055 804 90 30" style="position:absolute;left:1055px;top:804px"><path d="M1066.3,813.5V825.5L1060.3,819.5Z" fill="#8a8a8a"/><path d="M1132.3,813.5V825.5L1138.3,819.5Z" fill="#8a8a8a"/><path d="M1093.5,817H1104.5L1099,822.5Z" fill="#c9c8c7"/></svg><div style="position:absolute;left:1081.3px;top:803.7px;width:34.7px;height:40px;background:#f6f5f4;border:1px solid #d3d2d1;border-radius:4px;"></div><svg width="12" height="7" style="position:absolute;left:1093.3px;top:816.8px"><path d="M0,0H11.4L5.7,6Z" fill="#c9c8c7"/></svg><div style="position:absolute;left:1153.5px;top:806px;width:1px;height:27px;background:#dcdbda;"></div><span style="position:absolute;top:803.20px;line-height:17px;font-size:12px;color:#9a9a9a;white-space:pre;left:1160.70px;letter-spacing:-0.919px;">X:</span><span style="position:absolute;top:819.80px;line-height:17px;font-size:12px;color:#9a9a9a;white-space:pre;left:1160.70px;letter-spacing:-0.588px;">Y:</span><span style="position:absolute;top:803.70px;line-height:16px;font-size:11.6px;color:#9a9a9a;white-space:pre;left:1186.30px;letter-spacing:-0.463px;">63.91</span><span style="position:absolute;top:820.30px;line-height:16px;font-size:11.6px;color:#9a9a9a;white-space:pre;left:1186.30px;letter-spacing:-0.463px;">45.38</span><span style="position:absolute;top:810.50px;line-height:18px;font-size:13px;color:#9a9a9a;white-space:pre;left:1225.30px;letter-spacing:-0.276px;">Z:</span><div style="position:absolute;left:1240.3px;top:803.7px;width:75px;height:38px;background:#fdfdfd;border:1px solid #cfcecd;border-radius:4px;"></div><div style="position:absolute;left:1283px;top:804.7px;width:1px;height:38px;background:#e6e5e4;"></div><div style="position:absolute;left:1300px;top:804.7px;width:1px;height:38px;background:#e6e5e4;"></div><span style="position:absolute;top:811.70px;line-height:17px;font-size:12.2px;color:#3a3a3a;white-space:pre;left:1249.70px;letter-spacing:-0.718px;">270%</span><div style="position:absolute;left:1286.3px;top:819.0px;width:11.4px;height:1.9px;background:#808080;"></div><div style="position:absolute;left:1303.45px;top:819.0px;width:11.4px;height:1.9px;background:#8a8a8a;"></div><div style="position:absolute;left:1308.2px;top:814.2px;width:1.9px;height:11.4px;background:#8a8a8a;"></div><span style="position:absolute;top:810.50px;line-height:18px;font-size:13px;color:#9a9a9a;white-space:pre;left:1328.00px;letter-spacing:-0.750px;">R:</span><div style="position:absolute;left:1342.3px;top:803.7px;width:88px;height:38px;background:#fdfdfd;border:1px solid #cfcecd;border-radius:4px;"></div><div style="position:absolute;left:1391.5px;top:804.7px;width:1px;height:38px;background:#e6e5e4;"></div><div style="position:absolute;left:1408px;top:804.7px;width:1px;height:38px;background:#e6e5e4;"></div><span style="position:absolute;top:811.70px;line-height:17px;font-size:12.2px;color:#3a3a3a;white-space:pre;left:1357.30px;letter-spacing:-0.439px;">0.00°</span><div style="position:absolute;left:1394.55px;top:819.0px;width:11.4px;height:1.9px;background:#808080;"></div><div style="position:absolute;left:1414.95px;top:819.0px;width:11.4px;height:1.9px;background:#8a8a8a;"></div><div style="position:absolute;left:1419.7px;top:814.2px;width:1.9px;height:11.4px;background:#8a8a8a;"></div><svg width="1421" height="836" viewBox="0 0 1421 836" style="position:absolute;left:0;top:0;pointer-events:none"><g transform="translate(2.8,2.8) scale(1.0)"><defs><linearGradient id="lg2" x1="0" y1="0" x2="1" y2="1"><stop offset="0" stop-color="#fff"/><stop offset="0.5" stop-color="#a9b6c6"/><stop offset="1" stop-color="#0b1522"/></linearGradient></defs><path d="M7.9,0.2 L15.4,7.4 Q15.9,8.2 14.8,8.6 L11.8,9.4 L12.4,10.4 L9.6,11.4 L11,12.6 L8.4,15.2 Q7.9,15.6 7.4,15.2 L5.2,13 L6.4,11.8 L3.4,10.6 L4.6,9.6 L1,8.6 Q-0.1,8.2 0.4,7.4 Z" fill="#0a0a0a"/><path d="M7.9,1.8 L13.2,6.9 Q11,7.4 9.6,6.2 Q8.6,7.6 6.8,6.6 Q5.4,7.8 3.4,6.4 Z" fill="url(#lg2)"/><rect x="1.6" y="12.6" width="2.2" height="1" rx="0.5" fill="#0a0a0a"/><rect x="12.6" y="10.6" width="2.2" height="1" rx="0.5" fill="#0a0a0a"/><circle cx="13.2" cy="13.2" r="0.7" fill="#0a0a0a"/></g><rect x="9.8" y="65.7" width="13.8" height="13.8" fill="none" stroke="#000" stroke-width="1.3" stroke-dasharray="1.1 1.2"/><rect x="11.3" y="73" width="7.3" height="4.6" fill="#000"/><circle cx="18.6" cy="70.8" r="4.4" fill="#f6f5f4"/><circle cx="18.6" cy="70.8" r="3.7" fill="#000"/><rect x="50.8" y="65.7" width="13.8" height="13.8" fill="none" stroke="#000" stroke-width="1.3" stroke-dasharray="1.1 1.2"/><path d="M54.6,67.2h8.4l-2.2,2.6h-8.4z" fill="#222"/><path d="M54.6,71.3h8.4l-2.2,2.6h-8.4z" fill="#222"/><path d="M54.6,75.3h8.4l-2.2,2.6h-8.4z" fill="#222"/><rect x="91.8" y="65.7" width="13.8" height="13.8" fill="none" stroke="#9a9a9a" stroke-width="1.3" stroke-dasharray="1.1 1.2"/><rect x="93.3" y="73" width="7.3" height="4.6" fill="#868686"/><circle cx="100.6" cy="70.8" r="4.4" fill="#f6f5f4"/><circle cx="100.6" cy="70.8" r="3.7" fill="#868686"/><rect x="133.7" y="69.7" width="9.8" height="9.5" fill="none" stroke="#000" stroke-width="1.4" stroke-dasharray="2.4 1.6"/><rect x="142.1" y="66" width="4.9" height="4.9" fill="#000"/><rect x="190" y="65" width="5" height="10" fill="#808080"/><rect x="179" y="75.8" width="10.1" height="5.1" fill="#000"/><path d="M188.3,67.2 Q183.6,67 183.2,71.2" fill="none" stroke="#1d8a1d" stroke-width="1.9"/><path d="M180.2,70.2h6l-3,3.6z" fill="#1d8a1d"/><rect x="220.1" y="65" width="5" height="10" fill="#808080"/><rect x="226.1" y="75.8" width="10.1" height="5.1" fill="#000"/><path d="M226.9,67.2 Q231.6,67 232,71.2" fill="none" stroke="#1d8a1d" stroke-width="1.9"/><path d="M229,70.2h6l-3,3.6z" fill="#1d8a1d"/><path d="M261.8,78H268.4V67.4Z" fill="#929292"/><path d="M270.7,67.4V78H277Z" fill="#000"/><path d="M269.5,65.6V80.4" stroke="#000" stroke-width="1.2" stroke-dasharray="1.6 1"/><path d="M305.1,66.3V71.9H315.3Z" fill="#929292"/><path d="M305.1,74.5H315.6L305.1,81Z" fill="#000"/><path d="M302.9,73.2H317.3" stroke="#000" stroke-width="1.2" stroke-dasharray="1.6 1"/><rect x="349.9" y="70.1" width="5" height="1.9" fill="#777"/><rect x="349.9" y="74.1" width="5" height="1.9" fill="#777"/><rect x="349.9" y="78.1" width="5" height="1.9" fill="#777"/><rect x="349.9" y="66" width="13.200000000000045" height="2" fill="#000"/><path d="M359.15000000000003,80V73.2H357.20000000000005L360.1,70.5L363.0,73.2H361.05V80Z" fill="#1d8a1d"/><rect x="391" y="66" width="5" height="1.9" fill="#777"/><rect x="391" y="74.1" width="5" height="1.9" fill="#777"/><rect x="391" y="78.1" width="5" height="1.9" fill="#777"/><rect x="391" y="70" width="13" height="2" fill="#000"/><path d="M400.05,80V76.2H398.1L401,73.5L403.9,76.2H401.95V80Z" fill="#1d8a1d"/><rect x="432.1" y="66" width="5" height="1.9" fill="#777"/><rect x="432.1" y="70.1" width="5" height="1.9" fill="#777"/><rect x="432.1" y="78.1" width="5" height="1.9" fill="#777"/><rect x="432.1" y="74.1" width="12.899999999999977" height="2" fill="#000"/><path d="M441.15000000000003,66V70.0H439.20000000000005L442.1,72.7L445.0,70.0H443.05V66Z" fill="#1d8a1d"/><rect x="473.1" y="66" width="5" height="1.9" fill="#777"/><rect x="473.1" y="70.1" width="5" height="1.9" fill="#777"/><rect x="473.1" y="74.1" width="5" height="1.9" fill="#777"/><rect x="473.1" y="78.1" width="12.899999999999977" height="2" fill="#000"/><path d="M482.05,66V73.6H480.1L483,76.3L485.9,73.6H483.95V66Z" fill="#1d8a1d"/><rect x="883.1" y="71.3" width="9.9" height="8.6" rx="0.6" fill="#000"/><path d="M885.3,71.8V69.2a2.75,2.9 0 0 1 5.5,0V71.8" fill="none" stroke="#000" stroke-width="1.8"/><path d="M1115.0,67H1126.0V73" fill="none" stroke="#000" stroke-width="1.7"/><path d="M1115.0,70.3H1122.1999999999998V73" fill="none" stroke="#000" stroke-width="1"/><rect x="1115.1" y="77.2" width="1.8" height="1.8" fill="#000"/><rect x="1118.0" y="77.2" width="1.8" height="1.8" fill="#000"/><rect x="1120.6" y="77.2" width="3.5" height="1.8" fill="#000"/><path d="M1123.6,75.1L1127.1999999999998,78.1L1123.6,81.1Z" fill="#000"/><path d="M1156.4,67H1161.5a6,6 0 0 1 6,6" fill="none" stroke="#000" stroke-width="1.7"/><path d="M1156.4,70.3H1160.6a3.4,3.4 0 0 1 3.2,3" fill="none" stroke="#000" stroke-width="1"/><rect x="1156.5" y="77.2" width="1.8" height="1.8" fill="#000"/><rect x="1159.4" y="77.2" width="1.8" height="1.8" fill="#000"/><rect x="1162" y="77.2" width="3.5" height="1.8" fill="#000"/><path d="M1165,75.1L1168.6,78.1L1165,81.1Z" fill="#000"/><defs><linearGradient id="gg1" x1="0" x2="1" y1="0" y2="0"><stop offset="0" stop-color="#1b9be0"/><stop offset="1" stop-color="#000"/></linearGradient></defs><path d="M1197.2,66.4H1208.6V73" fill="none" stroke="#000" stroke-width="1"/><rect x="1197.2" y="68" width="10" height="3.9" fill="url(#gg1)"/><path d="M1197.2,73.4H1205.2" stroke="#000" stroke-width="0.9"/><rect x="1197.3" y="77.2" width="1.8" height="1.8" fill="#000"/><rect x="1200.2" y="77.2" width="1.8" height="1.8" fill="#000"/><rect x="1202.8" y="77.2" width="3.5" height="1.8" fill="#000"/><path d="M1205.8,75.1L1209.3999999999999,78.1L1205.8,81.1Z" fill="#000"/><path d="M1238.3000000000002,66.4H1249.7V73" fill="none" stroke="#000" stroke-width="1"/><path d="M1240.1000000000001,68l2.6,1.7l-2.6,1.7M1243.5,68l2.6,1.7l-2.6,1.7" fill="none" stroke="#1b6fd0" stroke-width="0.9"/><path d="M1238.3000000000002,73.4H1247.3000000000002" stroke="#000" stroke-width="0.9"/><rect x="1238.4" y="77.2" width="1.8" height="1.8" fill="#000"/><rect x="1241.3000000000002" y="77.2" width="1.8" height="1.8" fill="#000"/><rect x="1243.9" y="77.2" width="3.5" height="1.8" fill="#000"/><path d="M1246.9,75.1L1250.5,78.1L1246.9,81.1Z" fill="#000"/><path d="M1367,66.3h1.6a6.75,6.75 0 0 1 0,13.5h-1.6" fill="none" stroke="#000" stroke-width="2.6"/><circle cx="1364.5" cy="66.5" r="1.6" fill="#1d8a1d"/><circle cx="1364.5" cy="79.5" r="1.6" fill="#1d8a1d"/><path d="M1364.4,70.6q-2.6,0.6-1.2,2.2q1.4,1.2-1.4,2.6" fill="none" stroke="#000" stroke-width="1.3"/><rect x="1366.9" y="99.9" width="12.6" height="8.6" rx="1.2" fill="none" stroke="#111" stroke-width="1.5"/><path d="M1370,110.7H1376.6" stroke="#111" stroke-width="1.4"/><path d="M1373.2,108.5v2" stroke="#111" stroke-width="2.4"/><rect x="29.9" y="104" width="10.3" height="7.8" rx="0.5" fill="#000"/><path d="M37.4,104.4V101.6a2.5,2.7 0 0 1 5,0V103.6" fill="none" stroke="#000" stroke-width="1.8"/><path d="M3.3,103.2V115.6L6.4,112.7L8.7,117.6L11.6,116.2L9.4,111.6L14.2,111.2Z" fill="none" stroke="#000" stroke-width="2" stroke-linejoin="round"/><path d="M1.3,147.8Q2.2,138 13.8,135.4" fill="none" stroke="#222" stroke-width="0.8"/><rect x="3.1" y="137" width="4.2" height="4.2" fill="#fff" stroke="#000" stroke-width="1.6"/><path d="M10.2,143.2L14.6,145.8L10.2,148.4Z" fill="#000"/><circle cx="5.5" cy="172.1" r="3.7" fill="none" stroke="#000" stroke-width="1.8"/><rect x="7.2" y="173.3" width="7.2" height="6.6" fill="#f6f5f4" stroke="#000" stroke-width="1.8"/><path d="M4,170.5L8.5,175.5" stroke="#000" stroke-width="0.7"/><rect x="2" y="203" width="12.3" height="12" rx="1.3" fill="#f0188f" stroke="#000" stroke-width="1.6"/><circle cx="8" cy="241" r="6.1" fill="#f655a8" stroke="#000" stroke-width="1.6"/><path d="M5.4,267.2L9.8,270.5L8.3,275.8H2.7L1.2,270.5Z" fill="#f06cae" stroke="#000" stroke-width="1.4" stroke-linejoin="round"/><path d="M10.9,270.6L12.2,273.3L15.2,273.7L13,275.7L13.6,278.7L10.9,277.2L8.2,278.7L8.8,275.7L6.6,273.7L9.6,273.3Z" fill="#fbb9d9" stroke="#000" stroke-width="1.2" stroke-linejoin="round"/><path d="M8,298L14.4,301.6V308.8L8,312L1.8,308.8V301.6Z" fill="#f06cae" stroke="#000" stroke-width="1.6" stroke-linejoin="round"/><path d="M8,298L14.4,301.6L8,305L1.8,301.6Z" fill="#f6c4db"/><path d="M1.8,301.6L8,305V312L1.8,308.8Z" fill="#e01a7e"/><path d="M8,298L14.4,301.6V308.8L8,312L1.8,308.8V301.6ZM1.8,301.6L8,305L14.4,301.6M8,305V312" fill="none" stroke="#000" stroke-width="1.5" stroke-linejoin="round"/><path d="M8.9,337.1L9.1,337.2L9.2,337.4L9.3,337.6L9.3,337.8L9.3,338.0L9.2,338.3L9.1,338.5L8.9,338.8L8.6,339.0L8.3,339.1L8.0,339.2L7.6,339.2L7.2,339.1L6.9,339.0L6.5,338.7L6.2,338.4L6.0,338.0L5.8,337.6L5.7,337.1L5.7,336.6L5.8,336.1L6.0,335.6L6.4,335.2L6.8,334.8L7.3,334.5L7.8,334.3L8.5,334.2L9.1,334.2L9.7,334.4L10.3,334.6L10.9,335.0L11.4,335.6L11.8,336.2L12.0,336.9L12.1,337.6L12.1,338.4L11.9,339.2L11.6,339.9L11.1,340.6L10.5,341.1L9.8,341.6L9.0,341.9L8.1,342.1L7.2,342.0L6.3,341.8L5.4,341.5L4.6,340.9L3.9,340.2L3.4,339.4L3.0,338.4L2.8,337.4L2.8,336.4L3.0,335.3L3.5,334.3L4.1,333.4L4.9,332.6L5.8,332.0L6.9,331.5L8.0,331.3L9.2,331.3L10.4,331.5L11.5,332.0L12.6,332.6L13.5,333.5L14.2,334.6L14.7,335.7L15.0,337.0L15.1,338.3L14.8,339.7L14.3,340.9" fill="none" stroke="#000" stroke-width="1.9" stroke-linecap="round" stroke-linejoin="round"/><path d="M1.8,372.6Q3,366.5 12,365.4" fill="none" stroke="#666" stroke-width="0.8"/><path d="M1.8,366V373" stroke="#1d8a1d" stroke-width="1"/><circle cx="1.8" cy="366" r="1.8" fill="#1d8a1d"/><rect x="0" y="372.5" width="3.7" height="3.7" fill="#1d8a1d"/><path d="M5.2,379.4L6.6,374.2L11.2,370.4L14.2,373.4L10.4,378Z" fill="#000"/><path d="M12,369.6L13.4,368.2L16,370.8L14.8,372.4Z" fill="#000"/><path d="M5.6,379L9.4,375.2" stroke="#fff" stroke-width="0.8"/><path d="M12.6,397.8L15.8,401.2L7.8,408.6L4.7,405.3Z" fill="#000"/><path d="M4.2,405.9L7.2,409L2.2,410.6Z" fill="#1d8a1d"/><path d="M10.9,399.4L14.1,402.8" stroke="#f6f5f4" stroke-width="0.8"/><path d="M3.4,397.4q3.4,-1 3.2,0.8q-0.4,1.6-3,2.2q-2.4,0.8-0.2,2.2q2.6,1.2 2.4,2.4q-0.4,1.4-3.6,1.2" fill="none" stroke="#1d8a1d" stroke-width="1.2" stroke-linecap="round"/><path d="M15.4,429.4L16,430L8.2,438.8L6.4,437.2Z" fill="#000"/><path d="M7.6,439L6.2,437.6L4.6,439.2L5.9,440.5Z" fill="#444"/><path d="M5.6,440.8L4.4,439.6L1.2,443Z" fill="#1d8a1d"/><path d="M1.4,436.2q0.2,-3.4 2,-3.4q1.4,0.2 1.6,1.4q0.6,1.2 1.8,-0.2q0.8,-1.2 0.6,-2.6" fill="none" stroke="#1d8a1d" stroke-width="1.2" stroke-linecap="round"/><rect x="14.1" y="460" width="1.8" height="16" fill="#1d8a1d"/><defs><linearGradient id="gt" x1="0" y1="0" x2="1" y2="1"><stop offset="0" stop-color="#1d97e2"/><stop offset="1" stop-color="#010910"/></linearGradient><radialGradient id="mg"><stop offset="0" stop-color="#1478c8"/><stop offset="1" stop-color="#1478c8" stop-opacity="0"/></radialGradient></defs><rect x="0.6" y="495.2" width="15.2" height="15.2" fill="#000"/><rect x="1.6" y="496.2" width="13.2" height="13.2" fill="#fff"/><rect x="2.5" y="497.1" width="11.4" height="11.4" fill="url(#gt)"/><defs><radialGradient id="mg2" cx="0" cy="0" r="8" gradientUnits="userSpaceOnUse"><stop offset="0" stop-color="#0a4f96"/><stop offset="0.55" stop-color="#2f8fd8"/><stop offset="1" stop-color="#cfe6f7"/></radialGradient></defs><rect x="1.1" y="527.7" width="14.3" height="14.6" fill="#fff" stroke="#000" stroke-width="1"/><path d="M0,0C0.6,-2.6 -1,-5 -3.2,-6.9C0,-7.4 3.4,-6.6 6.9,-6.9C3.6,-4.6 2.6,-1.6 0,0Z" transform="translate(8.25,535) rotate(0)" fill="url(#mg2)"/><path d="M0,0C0.6,-2.6 -1,-5 -3.2,-6.9C0,-7.4 3.4,-6.6 6.9,-6.9C3.6,-4.6 2.6,-1.6 0,0Z" transform="translate(8.25,535) rotate(90)" fill="url(#mg2)"/><path d="M0,0C0.6,-2.6 -1,-5 -3.2,-6.9C0,-7.4 3.4,-6.6 6.9,-6.9C3.6,-4.6 2.6,-1.6 0,0Z" transform="translate(8.25,535) rotate(180)" fill="url(#mg2)"/><path d="M0,0C0.6,-2.6 -1,-5 -3.2,-6.9C0,-7.4 3.4,-6.6 6.9,-6.9C3.6,-4.6 2.6,-1.6 0,0Z" transform="translate(8.25,535) rotate(270)" fill="url(#mg2)"/><path d="M8.4,528q2.2,3.8-0.2,7q-2.2,3.4 0,7M1.4,535.4q3.8,2 6.8,-0.4q3.4,-2.2 7,0" fill="none" stroke="#000" stroke-width="1.1"/><path d="M3.7,560.4q2.4,3 2.4,4.6a2.4,2.4 0 0 1-4.8,0q0,-1.6 2.4,-4.6z" fill="#1b8fe0"/><path d="M12.8,562.2a1.9,1.9 0 0 1 2.8,2.6l-1.6,1.8l0.6,0.8l-1.2,1.2l-4.6,-4.4l1.2,-1.2l0.9,0.7z" fill="#000"/><path d="M9.8,566.2L3.6,572.4Q2.6,573.6 3.4,574.2Q4.2,574.8 5.2,573.8L11.4,567.8" fill="none" stroke="#000" stroke-width="1.3"/><path d="M11.2,591.4L15.6,598.2L10,603.2L4.2,597.6Z" fill="#000"/><path d="M10.8,593.6L13.6,597.6L6.6,597.4Z" fill="#f6f5f4"/><path d="M9.4,590.6L12,594.4" stroke="#000" stroke-width="1.3"/><path d="M3.6,600.6q2.5,3.2 2.5,4.6a2.5,2.4 0 0 1-5,0q0,-1.4 2.5,-4.6z" fill="#1b8fe0"/><path d="M1,640.8V635.2Q3.4,634.6 5,632.4Q7,628.6 10.8,628.2Q13.8,628.2 14.2,630.6Q12.2,629.8 11,631Q9.8,632.6 11.4,634Q13,634.8 15,634.4V640.8Z" fill="#000"/><path d="M6.4,673V666.4Q6.4,664.6 8.4,664.2V662.6H12.4V664.2Q14.8,664.6 14.8,666.4V673Z" fill="#000"/><rect x="9.2" y="660" width="2.6" height="1.8" fill="#000"/><g fill="#8a8a8a"><circle cx="2" cy="661.2" r="0.7"/><circle cx="4.4" cy="660.2" r="0.7"/><circle cx="6.2" cy="662" r="0.7"/><circle cx="1.6" cy="664" r="0.7"/><circle cx="4" cy="663.4" r="0.7"/><circle cx="3.4" cy="666.4" r="0.7"/><circle cx="5.6" cy="665" r="0.6"/></g><path d="M11.4,690.6L15.4,694.8L11.4,698.6L7.4,694.6Z" fill="#000"/><path d="M6.8,695.4L9.8,698.6L6.4,702L3.2,698.8Z" fill="#8a8a8a"/><path d="M1,704.2H3.6M9,704.2H15" stroke="#000" stroke-width="1.5"/><path d="M1.2,724.6Q5.4,724 6.6,728.2Q7.6,732 11,732" fill="none" stroke="#000" stroke-width="2"/><path d="M10,727.6L14.8,732L10,736.2Z" fill="#000"/><path d="M3.4,765.6L6.4,758.6M12.4,765.6L9.4,758.6M1.6,765.4H14.4M5,762.6H11" fill="none" stroke="#000" stroke-width="1.4"/><circle cx="7.9" cy="757.2" r="1.9" fill="none" stroke="#000" stroke-width="1.3"/><path d="M1404,111.5H1410.6L1414,115V121.6H1404Z" fill="none" stroke="#000" stroke-width="2" stroke-linejoin="round"/><path d="M1410.4,111.6V115.2H1414" fill="none" stroke="#000" stroke-width="1.2"/><path d="M1416.4,107.4l0.9,2l2.2,0.2l-1.7,1.5l0.5,2.2l-1.9,-1.2l-1.9,1.2l0.5,-2.2l-1.7,-1.5l2.2,-0.2z" fill="#1d8a1d"/><path d="M1403,158.8V145H1408.6L1409.8,147.2H1416.8V149.6H1406.2L1403.2,158.8Z" fill="#000"/><path d="M1406.8,150.6H1419.2L1416.4,159H1403.8Z" fill="#000"/><path d="M1410.3,181.2V186H1408.2L1411.2,189.4L1414.2,186H1412.1V181.2Z" fill="#1d8a1d"/><path d="M1404,197V192.4L1406.4,188.8H1408.2L1406.4,192H1416L1414.2,188.8H1416L1418.2,192.4V197Z" fill="#000"/><rect x="1408.4" y="193.6" width="5.6" height="1.2" fill="#f6f5f4"/><rect x="1407.2" y="218.8" width="8" height="3" fill="#2a2a2a"/><path d="M1404,228.6V224.2Q1404,223 1405.2,223H1417Q1418.2,223 1418.2,224.2V228.6H1416V227H1406.4V228.6Z" fill="#333"/><rect x="1407.2" y="227.8" width="8" height="4.2" fill="#000"/><path d="M1407,263.4V260H1413.4L1417,263.6V272.4H1407V269.6" fill="none" stroke="#000" stroke-width="2"/><path d="M1404,266.8H1409.6" stroke="#1d8a1d" stroke-width="1.7"/><path d="M1409,263.8L1413,266.8L1409,269.8Z" fill="#1d8a1d"/><path d="M1414,302V300.6L1410.4,297H1404V310H1414V308.6" fill="none" stroke="#000" stroke-width="2"/><path d="M1410,305.3H1415.4" stroke="#1d8a1d" stroke-width="1.7"/><path d="M1415,302.3L1419.2,305.3L1415,308.3Z" fill="#1d8a1d"/><path d="M1407,344H1412.2a3.6,3.2 0 0 1 0,6.6H1411" fill="none" stroke="#9c9c9c" stroke-width="1.7"/><path d="M1409.2,339.6L1404.6,344L1409.2,348.4Z" fill="#9c9c9c"/><path d="M1415,380.8H1409.8a3.6,3.2 0 0 0 0,6.6H1411" fill="none" stroke="#9c9c9c" stroke-width="1.7"/><path d="M1412.8,376.4L1417.4,380.8L1412.8,385.2Z" fill="#9c9c9c"/><rect x="1403" y="415.1" width="11" height="11" fill="#000"/><rect x="1407.4" y="420.3" width="12.2" height="11.2" fill="#000" stroke="#f6f5f4" stroke-width="1"/><path d="M1406.4,452.6L1414.6,463.2M1416,452.6L1407.6,463.2" stroke="#000" stroke-width="2" fill="none"/><circle cx="1406.7" cy="464.8" r="2.2" fill="none" stroke="#000" stroke-width="1.7"/><circle cx="1415.5" cy="464.8" r="2.2" fill="none" stroke="#000" stroke-width="1.7"/><rect x="1404.1" y="492" width="12" height="12" fill="none" stroke="#000" stroke-width="1.5"/><rect x="1407.6" y="490" width="5" height="2.6" fill="#000"/><path d="M1406.4,494.4H1414V500L1411.4,502.6H1406.4Z" fill="#000"/><path d="M1405,534.7H1416.8L1410.9,541Z" fill="#000"/><path d="M314.4,820.4Q321,812.4 327.6,820.4Q321,827.6 314.4,820.4Z" fill="none" stroke="#8a8a8a" stroke-width="1.7"/><circle cx="321" cy="820.4" r="2" fill="#8a8a8a"/><path d="M321,816V813.4M317.4,816.8L316,814.6M324.6,816.8L326,814.6" stroke="#8a8a8a" stroke-width="1.2"/><rect x="352" y="818.6" width="10.2" height="8.2" fill="#8a8a8a"/><path d="M359.4,818.8V816.2a2.5,2.6 0 0 1 5,0V817.8" fill="none" stroke="#8a8a8a" stroke-width="1.7"/></svg><div style="position:absolute;left:332px;top:142px;width:360px;height:616px;background:#fff;border:1px solid #9d9d9d;box-shadow:0 2px 11px rgba(0,0,0,0.36),0 0 3px rgba(0,0,0,0.12);"></div><div style="position:absolute;left:333px;top:173px;width:360px;height:586px;background:#f6f5f4;"></div><div style="position:absolute;left:338px;top:215px;width:350px;height:539px;background:#faf9f9;"></div><span style="position:absolute;top:148.80px;line-height:18px;font-size:12.5px;color:#7d7d7d;white-space:pre;left:362.60px;letter-spacing:-0.461px;">XML Editor - svg.pcb.MAX7219 32x8 LED Dot Matrix Di...</span><svg width="12" height="12" style="position:absolute;left:672.5px;top:151.5px"><path d="M0.7,0.7L10.5,10.5M10.5,0.7L0.7,10.5" stroke="#6f6f6f" stroke-width="1.1" fill="none"/></svg><div style="position:absolute;left:338px;top:178px;width:350px;height:36.5px;background:#ebeae9;"></div><div style="position:absolute;left:338px;top:178px;width:8.5px;height:36.5px;background:#e4e3e2;"></div><div style="position:absolute;left:346.5px;top:178px;width:122.5px;height:36.5px;background:#f6f5f4;"></div><div style="position:absolute;left:338px;top:214px;width:350px;height:1px;background:#d6d5d4;"></div><div style="position:absolute;left:346.5px;top:211px;width:122.5px;height:3.6px;background:#3a7bd5;"></div><div style="position:absolute;left:657px;top:181px;width:29.6px;height:29.4px;background:#efeeed;border-radius:4px;"></div><svg width="14" height="9" style="position:absolute;left:665px;top:191.5px"><path d="M1,1L6.8,6.8L12.6,1" stroke="#555" stroke-width="1.7" fill="none"/></svg><span style="position:absolute;top:187.00px;line-height:18px;font-size:12.5px;color:#8a8a8a;white-space:pre;left:379.30px;letter-spacing:-0.413px;">XML Editor</span><svg width="10" height="10" style="position:absolute;left:444.5px;top:191.5px"><path d="M1.2,1.2L7.8,7.8M7.8,1.2L1.2,7.8" stroke="#505050" stroke-width="1.9" fill="none"/></svg><div style="position:absolute;left:339px;top:252px;width:346px;height:227px;background:#fcfcfc;border:1px solid #cfcecd;"></div><div style="position:absolute;left:340px;top:348.2px;width:331px;height:18.5px;background:#3a7fde;"></div><div style="position:absolute;left:671px;top:253px;width:15px;height:212px;background:#f5f4f3;border-left:1px solid #e3e2e1;box-sizing:border-box;"></div><div style="position:absolute;left:675.8px;top:308px;width:7.2px;height:85px;background:#d2d2d1;border-radius:4px;"></div><div style="position:absolute;left:340px;top:465px;width:346px;height:15px;background:#f5f4f3;border-top:1px solid #e3e2e1;box-sizing:border-box;"></div><div style="position:absolute;left:343px;top:469.4px;width:282px;height:7.3px;background:#d2d2d1;border-radius:4px;"></div><span style="position:absolute;left:417.2px;top:254.6px;line-height:18px;font-size:12.6px;white-space:pre;letter-spacing:-0.234px"><span style="color:#8d8d8d">&lt;</span><span style="color:#2b5cb8">g</span><span style="color:#8d8d8d"> </span><span style="color:#c0304c">id</span><span style="color:#8d8d8d">=</span><span style="color:#b99a35">"layer1"</span><span style="color:#8d8d8d">&gt;</span></span><span style="position:absolute;left:435.5px;top:273.4px;line-height:18px;font-size:12.6px;white-space:pre;letter-spacing:-0.274px"><span style="color:#8d8d8d">&lt;</span><span style="color:#2b5cb8">g</span><span style="color:#8d8d8d"> </span><span style="color:#c0304c">id</span><span style="color:#8d8d8d">=</span><span style="color:#b99a35">"silkscreen"</span><span style="color:#8d8d8d">&gt;</span></span><span style="position:absolute;left:435.5px;top:292.4px;line-height:18px;font-size:12.6px;white-space:pre;letter-spacing:-0.195px"><span style="color:#8d8d8d">&lt;</span><span style="color:#2b5cb8">g</span><span style="color:#8d8d8d"> </span><span style="color:#c0304c">id</span><span style="color:#8d8d8d">=</span><span style="color:#b99a35">"copper1"</span><span style="color:#8d8d8d">&gt;</span></span><span style="position:absolute;left:453.2px;top:311.4px;line-height:18px;font-size:12.6px;white-space:pre;letter-spacing:-0.195px"><span style="color:#8d8d8d">&lt;</span><span style="color:#2b5cb8">g</span><span style="color:#8d8d8d"> </span><span style="color:#c0304c">id</span><span style="color:#8d8d8d">=</span><span style="color:#b99a35">"copper0"</span><span style="color:#8d8d8d">&gt;</span></span><span style="position:absolute;left:471.4px;top:330.3px;line-height:18px;font-size:12.6px;white-space:pre;letter-spacing:-0.185px"><span style="color:#8d8d8d">&lt;</span><span style="color:#2b5cb8">g</span><span style="color:#8d8d8d"> </span><span style="color:#c0304c">id</span><span style="color:#8d8d8d">=</span><span style="color:#b99a35">"g27"</span><span style="color:#8d8d8d">&gt;</span></span><span style="position:absolute;left:489.4px;top:348.6px;line-height:18px;font-size:12.6px;white-space:pre;letter-spacing:-0.169px"><span style="color:#e6eefb">&lt;</span><span style="color:#ffffff">ellipse</span><span style="color:#e6eefb"> </span><span style="color:#ffffff">id</span><span style="color:#e6eefb">=</span><span style="color:#ffffff">"connector0pin"</span><span style="color:#e6eefb">&gt;</span></span><span style="position:absolute;left:489.4px;top:367.6px;line-height:18px;font-size:12.6px;white-space:pre;letter-spacing:-0.169px"><span style="color:#8d8d8d">&lt;</span><span style="color:#2b5cb8">ellipse</span><span style="color:#8d8d8d"> </span><span style="color:#c0304c">id</span><span style="color:#8d8d8d">=</span><span style="color:#b99a35">"connector1pin"</span><span style="color:#8d8d8d">&gt;</span></span><span style="position:absolute;left:489.4px;top:386.6px;line-height:18px;font-size:12.6px;white-space:pre;letter-spacing:-0.193px"><span style="color:#8d8d8d">&lt;</span><span style="color:#2b5cb8">rect</span><span style="color:#8d8d8d"> </span><span style="color:#c0304c">id</span><span style="color:#8d8d8d">=</span><span style="color:#b99a35">"connector1terminal"</span><span style="color:#8d8d8d">&gt;</span></span><span style="position:absolute;left:489.4px;top:405.6px;line-height:18px;font-size:12.6px;white-space:pre;letter-spacing:-0.169px"><span style="color:#8d8d8d">&lt;</span><span style="color:#2b5cb8">ellipse</span><span style="color:#8d8d8d"> </span><span style="color:#c0304c">id</span><span style="color:#8d8d8d">=</span><span style="color:#b99a35">"connector2pin"</span><span style="color:#8d8d8d">&gt;</span></span><span style="position:absolute;left:489.4px;top:424.6px;line-height:18px;font-size:12.6px;white-space:pre;letter-spacing:-0.169px"><span style="color:#8d8d8d">&lt;</span><span style="color:#2b5cb8">ellipse</span><span style="color:#8d8d8d"> </span><span style="color:#c0304c">id</span><span style="color:#8d8d8d">=</span><span style="color:#b99a35">"connector3pin"</span><span style="color:#8d8d8d">&gt;</span></span><span style="position:absolute;left:489.4px;top:443.6px;line-height:18px;font-size:12.6px;white-space:pre;letter-spacing:-0.169px"><span style="color:#8d8d8d">&lt;</span><span style="color:#2b5cb8">ellipse</span><span style="color:#8d8d8d"> </span><span style="color:#c0304c">id</span><span style="color:#8d8d8d">=</span><span style="color:#b99a35">"connector4pin"</span><span style="color:#8d8d8d">&gt;</span></span><svg width="1421" height="836" style="position:absolute;left:0;top:0;pointer-events:none"><g fill="#a3a3a3"><path d="M398.6,260.3h11.2l-5.6,5.4Z"/><path d="M416.6,298.4h11.2l-5.6,5.4Z"/><path d="M434.5,317.4h11.2l-5.6,5.4Z"/><path d="M452.4,336.3h11.2l-5.6,5.4Z"/><path d="M419,276.6v11l5.6,-5.5Z"/></g></svg><div style="position:absolute;left:339px;top:483.6px;width:348px;height:1px;background:#dedddc;"></div><div style="position:absolute;left:339px;top:488px;width:346px;height:264px;background:#fcfcfc;border:1px solid #cfcecd;"></div><div style="position:absolute;left:340px;top:513px;width:346px;height:1px;background:#ecebea;"></div><div style="position:absolute;left:368.5px;top:489.4px;width:1px;height:23.6px;background:#ecebea;"></div><div style="position:absolute;left:443.8px;top:489.4px;width:1px;height:23.6px;background:#ecebea;"></div><svg width="14" height="14" style="position:absolute;left:347px;top:494px"><path d="M7,0.8V13M0.9,6.9H13.1" stroke="#111" stroke-width="1.9" fill="none"/></svg><span style="position:absolute;top:493.30px;line-height:17px;font-size:12.3px;color:#c3c3c3;white-space:pre;left:375.60px;font-weight:bold;letter-spacing:-0.373px;">Name</span><span style="position:absolute;top:493.30px;line-height:17px;font-size:12.3px;color:#c3c3c3;white-space:pre;left:450.30px;font-weight:bold;letter-spacing:-0.426px;">Value</span><span style="position:absolute;top:517.80px;line-height:17px;font-size:11.9px;color:#3c3c3c;white-space:pre;left:373.20px;letter-spacing:0.175px;">stroke-width</span><span style="position:absolute;top:517.80px;line-height:17px;font-size:11.9px;color:#3c3c3c;white-space:pre;left:448.40px;letter-spacing:-0.587px;">0.499619</span><span style="position:absolute;top:540.85px;line-height:17px;font-size:11.9px;color:#3c3c3c;white-space:pre;left:373.20px;letter-spacing:-0.097px;">stroke</span><span style="position:absolute;top:540.85px;line-height:17px;font-size:11.9px;color:#3c3c3c;white-space:pre;left:448.40px;letter-spacing:0.250px;">#ffbf00</span><span style="position:absolute;top:563.90px;line-height:17px;font-size:11.9px;color:#3c3c3c;white-space:pre;left:373.20px;letter-spacing:0.248px;">ry</span><span style="position:absolute;top:563.90px;line-height:17px;font-size:11.9px;color:#3c3c3c;white-space:pre;left:448.40px;letter-spacing:-0.590px;">0.7371347</span><span style="position:absolute;top:586.95px;line-height:17px;font-size:11.9px;color:#3c3c3c;white-space:pre;left:373.20px;letter-spacing:-0.152px;">rx</span><span style="position:absolute;top:586.95px;line-height:17px;font-size:11.9px;color:#3c3c3c;white-space:pre;left:448.40px;letter-spacing:-0.484px;">0.71197969</span><span style="position:absolute;top:610.00px;line-height:17px;font-size:11.9px;color:#3c3c3c;white-space:pre;left:373.20px;letter-spacing:0.273px;">id</span><span style="position:absolute;top:610.00px;line-height:17px;font-size:11.9px;color:#3c3c3c;white-space:pre;left:448.40px;letter-spacing:0.162px;">connector0pin</span><span style="position:absolute;top:633.05px;line-height:17px;font-size:11.9px;color:#3c3c3c;white-space:pre;left:373.20px;letter-spacing:0.250px;">gorn</span><span style="position:absolute;top:633.05px;line-height:17px;font-size:11.9px;color:#3c3c3c;white-space:pre;left:448.40px;letter-spacing:-0.475px;">0.2.0.0.1.0.0.0</span><span style="position:absolute;top:656.10px;line-height:17px;font-size:11.9px;color:#3c3c3c;white-space:pre;left:373.20px;letter-spacing:0.368px;">fill</span><span style="position:absolute;top:656.10px;line-height:17px;font-size:11.9px;color:#3c3c3c;white-space:pre;left:448.40px;letter-spacing:0.137px;">none</span><span style="position:absolute;top:679.15px;line-height:17px;font-size:11.9px;color:#3c3c3c;white-space:pre;left:373.20px;letter-spacing:-0.295px;">cy</span><span style="position:absolute;top:679.15px;line-height:17px;font-size:11.9px;color:#3c3c3c;white-space:pre;left:448.40px;letter-spacing:-0.492px;">11.138655</span><span style="position:absolute;top:702.20px;line-height:17px;font-size:11.9px;color:#3c3c3c;white-space:pre;left:373.20px;letter-spacing:-0.295px;">cx</span><span style="position:absolute;top:702.20px;line-height:17px;font-size:11.9px;color:#3c3c3c;white-space:pre;left:448.40px;letter-spacing:-0.590px;">1.5764487</span><svg width="1421" height="836" style="position:absolute;left:0;top:0;pointer-events:none"><g transform="translate(348.2,518.1)"><path d="M4,0.6h3.8v1.5h-3.8z M0,1.9h11.8v1.9h-11.8z M1.3,4.4h9.2l-0.7,8.1q-0.1,1.1-1.2,1.1h-5.4q-1.1,0-1.2-1.1z" fill="#2e2e2e"/><path d="M4,5.6v6.2M5.9,5.6v6.2M7.8,5.6v6.2" stroke="#9a9a9a" stroke-width="0.7"/></g><g transform="translate(348.2,541.1)"><path d="M4,0.6h3.8v1.5h-3.8z M0,1.9h11.8v1.9h-11.8z M1.3,4.4h9.2l-0.7,8.1q-0.1,1.1-1.2,1.1h-5.4q-1.1,0-1.2-1.1z" fill="#2e2e2e"/><path d="M4,5.6v6.2M5.9,5.6v6.2M7.8,5.6v6.2" stroke="#9a9a9a" stroke-width="0.7"/></g><g transform="translate(348.2,564.2)"><path d="M4,0.6h3.8v1.5h-3.8z M0,1.9h11.8v1.9h-11.8z M1.3,4.4h9.2l-0.7,8.1q-0.1,1.1-1.2,1.1h-5.4q-1.1,0-1.2-1.1z" fill="#2e2e2e"/><path d="M4,5.6v6.2M5.9,5.6v6.2M7.8,5.6v6.2" stroke="#9a9a9a" stroke-width="0.7"/></g><g transform="translate(348.2,587.2)"><path d="M4,0.6h3.8v1.5h-3.8z M0,1.9h11.8v1.9h-11.8z M1.3,4.4h9.2l-0.7,8.1q-0.1,1.1-1.2,1.1h-5.4q-1.1,0-1.2-1.1z" fill="#2e2e2e"/><path d="M4,5.6v6.2M5.9,5.6v6.2M7.8,5.6v6.2" stroke="#9a9a9a" stroke-width="0.7"/></g><g transform="translate(348.2,610.3)"><path d="M4,0.6h3.8v1.5h-3.8z M0,1.9h11.8v1.9h-11.8z M1.3,4.4h9.2l-0.7,8.1q-0.1,1.1-1.2,1.1h-5.4q-1.1,0-1.2-1.1z" fill="#2e2e2e"/><path d="M4,5.6v6.2M5.9,5.6v6.2M7.8,5.6v6.2" stroke="#9a9a9a" stroke-width="0.7"/></g><g transform="translate(348.2,633.3)"><path d="M4,0.6h3.8v1.5h-3.8z M0,1.9h11.8v1.9h-11.8z M1.3,4.4h9.2l-0.7,8.1q-0.1,1.1-1.2,1.1h-5.4q-1.1,0-1.2-1.1z" fill="#2e2e2e"/><path d="M4,5.6v6.2M5.9,5.6v6.2M7.8,5.6v6.2" stroke="#9a9a9a" stroke-width="0.7"/></g><g transform="translate(348.2,656.4)"><path d="M4,0.6h3.8v1.5h-3.8z M0,1.9h11.8v1.9h-11.8z M1.3,4.4h9.2l-0.7,8.1q-0.1,1.1-1.2,1.1h-5.4q-1.1,0-1.2-1.1z" fill="#2e2e2e"/><path d="M4,5.6v6.2M5.9,5.6v6.2M7.8,5.6v6.2" stroke="#9a9a9a" stroke-width="0.7"/></g><g transform="translate(348.2,679.4)"><path d="M4,0.6h3.8v1.5h-3.8z M0,1.9h11.8v1.9h-11.8z M1.3,4.4h9.2l-0.7,8.1q-0.1,1.1-1.2,1.1h-5.4q-1.1,0-1.2-1.1z" fill="#2e2e2e"/><path d="M4,5.6v6.2M5.9,5.6v6.2M7.8,5.6v6.2" stroke="#9a9a9a" stroke-width="0.7"/></g><g transform="translate(348.2,702.5)"><path d="M4,0.6h3.8v1.5h-3.8z M0,1.9h11.8v1.9h-11.8z M1.3,4.4h9.2l-0.7,8.1q-0.1,1.1-1.2,1.1h-5.4q-1.1,0-1.2-1.1z" fill="#2e2e2e"/><path d="M4,5.6v6.2M5.9,5.6v6.2M7.8,5.6v6.2" stroke="#9a9a9a" stroke-width="0.7"/></g></svg><svg width="1421" height="836" viewBox="0 0 1421 836" style="position:absolute;left:0;top:0;pointer-events:none"><g transform="translate(340.8,148.4) scale(1.0)"><defs><linearGradient id="lg340" x1="0" y1="0" x2="1" y2="1"><stop offset="0" stop-color="#fff"/><stop offset="0.5" stop-color="#a9b6c6"/><stop offset="1" stop-color="#0b1522"/></linearGradient></defs><path d="M7.9,0.2 L15.4,7.4 Q15.9,8.2 14.8,8.6 L11.8,9.4 L12.4,10.4 L9.6,11.4 L11,12.6 L8.4,15.2 Q7.9,15.6 7.4,15.2 L5.2,13 L6.4,11.8 L3.4,10.6 L4.6,9.6 L1,8.6 Q-0.1,8.2 0.4,7.4 Z" fill="#0a0a0a"/><path d="M7.9,1.8 L13.2,6.9 Q11,7.4 9.6,6.2 Q8.6,7.6 6.8,6.6 Q5.4,7.8 3.4,6.4 Z" fill="url(#lg340)"/><rect x="1.6" y="12.6" width="2.2" height="1" rx="0.5" fill="#0a0a0a"/><rect x="12.6" y="10.6" width="2.2" height="1" rx="0.5" fill="#0a0a0a"/><circle cx="13.2" cy="13.2" r="0.7" fill="#0a0a0a"/></g><rect x="359.6" y="188.7" width="15" height="15" fill="#fff" stroke="#000" stroke-width="1.2"/><rect x="361.2" y="190.1" width="11.8" height="1.7" fill="#1d8a1d"/><path d="M366.2,194L362.4,197.6L366.2,201.2M368.6,194L372.4,197.6L368.6,201.2" fill="none" stroke="#000" stroke-width="1.5"/><rect x="349.7" y="225.6" width="15" height="15" fill="#fbfbfa" stroke="#a6a6a6" stroke-width="1"/><text x="351.59999999999997" y="232.4" font-size="5.6" fill="#9a9a9a" font-family="Liberation Sans, sans-serif">xml</text><path d="M354.4,234L351.8,236.2L354.4,238.4M355.59999999999997,234L358.2,236.2L355.59999999999997,238.4" fill="none" stroke="#c2c2c2" stroke-width="0.8"/><path d="M359.59999999999997,236.2h3.6M361.4,234.4v3.6" stroke="#8cc88c" stroke-width="1"/><rect x="385.6" y="225.6" width="15" height="15" fill="#fbfbfa" stroke="#a6a6a6" stroke-width="1"/><text x="387.5" y="232.4" font-size="5.6" fill="#9a9a9a" font-family="Liberation Sans, sans-serif">abc</text><path d="M390.3,234L387.70000000000005,236.2L390.3,238.4M391.5,234L394.1,236.2L391.5,238.4" fill="none" stroke="#c2c2c2" stroke-width="0.8"/><path d="M395.5,236.2h3.6M397.3,234.4v3.6" stroke="#8cc88c" stroke-width="1"/><rect x="421.6" y="225.6" width="11.3" height="11.2" fill="#fbfbfa" stroke="#a6a6a6"/><rect x="425.7" y="229.6" width="11.1" height="11.1" fill="#fbfbfa" stroke="#a6a6a6"/><path d="M430.2,232.2L428.2,234L430.2,235.8M431.6,232.2L433.6,234L431.6,235.8" fill="none" stroke="#c2c2c2" stroke-width="0.8"/><path d="M432,238.6h3.6M434,237l1.8,1.6l-1.8,1.6" fill="none" stroke="#8cc88c" stroke-width="1"/><rect x="457.5" y="225.6" width="15.2" height="15" fill="#fbfbfa" stroke="#a6a6a6"/><path d="M461.6,227.6L459.6,229.2L461.6,230.8M463,227.6L465,229.2L463,230.8" fill="none" stroke="#c2c2c2" stroke-width="0.8"/><path d="M465.6,233.6L470.8,239M470.8,233.6L465.6,239" stroke="#f3a6cd" stroke-width="1.7"/><path d="M495,229.6h5.2M495,232.8h5.2" stroke="#bdbdbd" stroke-width="1.3"/><path d="M506.6,228.2L502.6,231.2L506.6,234.2" fill="none" stroke="#86c486" stroke-width="1.5"/><path d="M500,237.2h7" stroke="#9c9c9c" stroke-width="1.5"/><path d="M537.4,229.6h5.6M537.4,232.8h5.6" stroke="#bdbdbd" stroke-width="1.3"/><path d="M531.4,228.2L535.4,231.2L531.4,234.2" fill="none" stroke="#86c486" stroke-width="1.5"/><path d="M531,237.2h7" stroke="#9c9c9c" stroke-width="1.5"/><path d="M567.2,236.6L572.9,230.8L578.6,236.6" fill="none" stroke="#8a8a8a" stroke-width="1.7"/><path d="M603.4,229.6L609.1,235.4L614.8,229.6" fill="none" stroke="#8a8a8a" stroke-width="1.7"/><rect x="654.6" y="225.9" width="13.8" height="13.6" fill="#fff" stroke="#000" stroke-width="1.5"/><path d="M656.6,227.8H666.6V233H661.6V237.6H656.6Z" fill="#000"/><path d="M666,239.8L668.8,237" stroke="#000" stroke-width="1.2"/><path d="M672.3,229.8H683.8L678,236.2Z" fill="#8e8e8e"/></svg><svg width="1421" height="836" style="position:absolute;left:0;top:0;pointer-events:none"><path d="M334.6,552.3C333.5,552.4 330.1,552.6 328.0,552.9C325.9,553.2 323.7,553.0 322.2,553.9C320.7,554.8 320.2,556.4 319.2,558.5C318.2,560.6 317.1,564.0 316.0,566.4C314.9,568.8 313.6,570.7 312.6,573.0C311.6,575.3 310.6,577.8 309.8,580.0C309.0,582.2 308.2,584.2 307.8,586.0C307.4,587.8 307.2,588.9 307.1,590.7C307.0,592.5 306.9,594.9 306.9,597.0C306.9,599.1 306.9,601.6 307.1,603.3C307.3,605.0 307.6,606.3 308.2,607.3C308.8,608.3 309.4,609.1 311.0,609.5C312.6,609.9 313.5,609.8 318.0,609.8C322.5,609.8 326.0,609.8 338.2,609.7C350.4,609.6 375.7,609.3 391.0,609.2C406.3,609.1 418.2,609.2 430.0,609.1C441.8,609.0 451.1,608.8 461.7,608.4C472.3,608.0 482.8,607.7 493.4,607.0C503.9,606.3 517.1,605.2 525.0,604.4C532.9,603.6 537.4,603.4 540.9,602.3C544.4,601.2 545.1,599.8 546.2,598.0C547.3,596.2 547.6,594.0 547.7,591.7C547.8,589.4 547.2,587.1 546.7,584.3C546.2,581.5 545.4,577.8 544.6,574.8C543.8,571.8 543.4,568.4 541.9,566.4C540.4,564.4 538.4,563.7 535.6,562.7C532.8,561.8 532.0,561.0 525.0,560.7C518.0,560.4 503.9,561.1 493.4,560.8C482.8,560.5 472.3,559.6 461.7,559.0C451.1,558.4 441.8,557.4 430.0,557.0C418.2,556.6 404.5,556.8 391.0,556.6C377.5,556.4 359.0,556.1 348.8,555.7C338.6,555.4 334.4,554.8 330.0,554.5C325.6,554.2 323.7,554.0 322.4,553.9" fill="none" stroke="#e21b22" stroke-width="3.7" stroke-linecap="round" stroke-linejoin="round"/></svg></body></html>
